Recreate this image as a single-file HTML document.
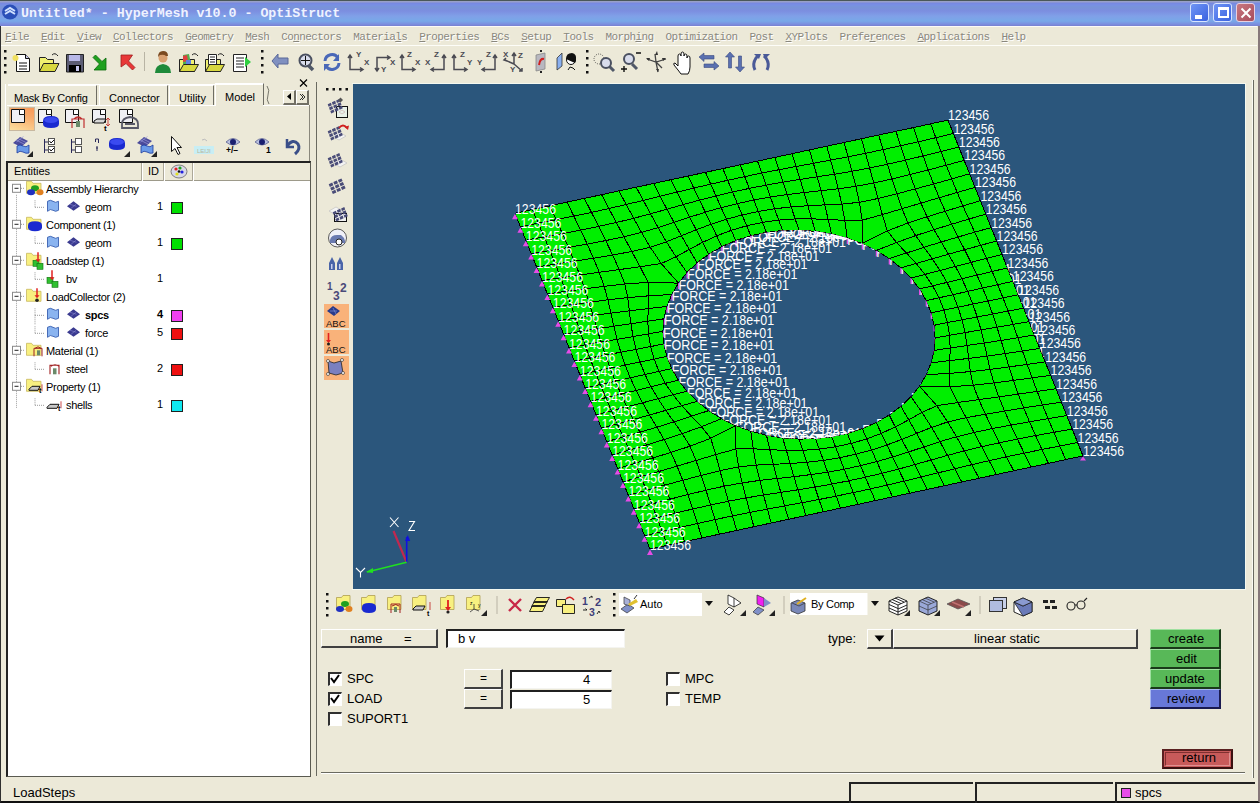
<!DOCTYPE html>
<html><head><meta charset="utf-8">
<style>
*{margin:0;padding:0;box-sizing:border-box}
html,body{width:1260px;height:803px;overflow:hidden;background:#ECE9D8}
body{font-family:"Liberation Sans",sans-serif;font-size:11px;color:#000;position:relative}
.a{position:absolute}
.t{position:absolute;white-space:pre;line-height:1}
#title{left:0;top:0;width:1260px;height:26px;background:linear-gradient(#4a5858 0px,#4a5858 1px,#98a0c8 1px,#98a0c8 2px,#7888e0 3px,#7890e4 5px,#7894d8 7px,#7c8ee0 11px,#80a0e8 16px,#78a8e8 21px,#7c90e0 24px,#7880d0 26px)}
#menu{left:0;top:26px;width:1260px;height:20px;background:#ECE9D8}
.mono{font-family:"Liberation Mono",monospace}
u{text-decoration:underline;text-underline-offset:1px;text-decoration-thickness:1px}
.btn{position:absolute;background:#ECE9D8;border-top:1px solid #fff;border-left:1px solid #fff;border-right:2px solid #404040;border-bottom:2px solid #404040;text-align:center}
.fld{position:absolute;background:#fff;border-top:2px solid #202020;border-left:2px solid #202020;border-right:1px solid #f4f4f0;border-bottom:1px solid #f4f4f0}
.cb{position:absolute;width:14px;height:14px;background:#fff;border-top:2px solid #303030;border-left:2px solid #303030;border-right:1px solid #fff;border-bottom:1px solid #fff}
.gb{position:absolute;background:#58b858;border-top:1px solid #9fe09f;border-left:1px solid #9fe09f;border-right:2px solid #1a3a1a;border-bottom:2px solid #1a3a1a;text-align:center;font-size:13px;line-height:17px}
</style></head><body>
<!-- window border -->
<div class="a" style="left:0;top:26px;width:1260px;height:777px;border-left:1px solid #303030;border-right:2px solid #86787a;border-bottom:2px solid #101010"></div>
<div id="title" class="a"></div>

<!-- app icon -->
<svg class="a" style="left:1px;top:3px" width="18" height="18" viewBox="0 0 18 18"><ellipse cx="9" cy="9" rx="8" ry="7.5" fill="#2a4fb8"/><path d="M4 8 L9 5 L14 8 M4 11 L9 8 L14 11" stroke="#cfe0ff" stroke-width="2" fill="none"/></svg>
<div class="t mono" style="left:21px;top:7px;font-size:13.3px;font-weight:bold;color:#eef2ff">Untitled* - HyperMesh v10.0 - OptiStruct</div>
<!-- title buttons -->
<div class="a" style="left:1190px;top:3px;width:19px;height:19px;border:1px solid #d8e4ff;border-radius:3px;background:linear-gradient(135deg,#6f95f5,#3a62e0)"><div class="a" style="left:4px;top:11px;width:7px;height:4px;background:#fff"></div></div>
<div class="a" style="left:1213px;top:3px;width:19px;height:19px;border:1px solid #d8e4ff;border-radius:3px;background:linear-gradient(135deg,#6f95f5,#3a62e0)"><div class="a" style="left:4px;top:3px;width:11px;height:11px;border:2px solid #fff;border-top-width:3px"></div></div>
<div class="a" style="left:1236px;top:3px;width:19px;height:19px;border:1px solid #e8d0e0;border-radius:3px;background:linear-gradient(135deg,#c87880,#a84c5c)"><svg class="a" style="left:3px;top:3px" width="12" height="12"><path d="M1.5 1.5L10.5 10.5M10.5 1.5L1.5 10.5" stroke="#fff" stroke-width="2"/></svg></div>

<!-- menu -->
<div class="a" style="left:1px;top:26px;width:1256px;height:1px;background:#fbfbf6"></div>
<div class="t mono" style="left:5px;top:31.5px;font-size:11px;letter-spacing:-0.6px;color:#8a887e;text-shadow:1px 1px 0 #fff"><u>F</u>ile  <u>E</u>dit  <u>V</u>iew  <u>C</u>ollectors  <u>G</u>eometry  <u>M</u>esh  Co<u>n</u>nectors  Materia<u>l</u>s  <u>P</u>roperties  <u>B</u>Cs  <u>S</u>etup  <u>T</u>ools  Morph<u>i</u>ng  Optimiza<u>t</u>ion  P<u>o</u>st  <u>X</u>YPlots  Prefe<u>r</u>ences  <u>A</u>pplications  <u>H</u>elp</div>
<div class="a" style="left:1px;top:45px;width:1256px;height:1px;background:#fdfdf8"></div>


<!-- main toolbar -->
<div id="tb1" class="a" style="left:0;top:46px;width:1260px;height:34px"></div>
<svg class="a" style="left:0;top:46px" width="800" height="34" viewBox="0 46 800 34">
<g fill="#111">
<rect x="4" y="50" width="2.5" height="2.5"/><rect x="4" y="57" width="2.5" height="2.5"/><rect x="4" y="64" width="2.5" height="2.5"/><rect x="4" y="71" width="2.5" height="2.5"/>
<rect x="261" y="50" width="2.5" height="2.5"/><rect x="261" y="57" width="2.5" height="2.5"/><rect x="261" y="64" width="2.5" height="2.5"/><rect x="261" y="71" width="2.5" height="2.5"/>
<rect x="586" y="50" width="2.5" height="2.5"/><rect x="586" y="57" width="2.5" height="2.5"/><rect x="586" y="64" width="2.5" height="2.5"/><rect x="586" y="71" width="2.5" height="2.5"/>
</g>
<!-- new doc -->
<path d="M16.5 54.5h9l4 4v13h-13z" fill="#fff" stroke="#111"/><path d="M25.5 54.5v4h4" fill="#c8c8e8" stroke="#111"/>
<path d="M19 63h8M19 66h8M19 69h8" stroke="#111"/>
<circle cx="15.5" cy="58" r="3" fill="#f0e060"/>
<!-- open folder -->
<path d="M39.5 57.5h6l2 2h6v12h-14z" fill="#f0f070" stroke="#222"/><path d="M39.5 71.5l4-8h15.5l-4 8z" fill="#d8d840" stroke="#222"/>
<path d="M52 55q3-3 6 1" stroke="#222" fill="none"/>
<!-- floppy -->
<path d="M66.5 54.5h17v17.5h-17z" fill="#5c5c74" stroke="#222"/><rect x="69" y="55" width="11" height="6" fill="#b8b8e8"/><rect x="69" y="65" width="12" height="7" fill="#000"/><rect x="76" y="66" width="3" height="5" fill="#c8c8f0"/>
<!-- green arrow -->
<path d="M93 57.5L95.5 55L102 61.5L106 58V70H94L99.5 64Z" fill="#1fa01f" stroke="#0a6a0a" stroke-width="0.8"/>
<!-- red arrow -->
<path d="M135 67.5L132.5 70L126 63.5L121 67V55H132.5L128.5 61Z" fill="#e83838" stroke="#a02020" stroke-width="0.8"/>
<rect x="144" y="52" width="1" height="19" fill="#b8b4a4"/>
<!-- person -->
<circle cx="163" cy="58" r="4.5" fill="#d8a070"/><path d="M158 57q0-6 5-6q5 0 5 5h-2q-2-2-6-1z" fill="#7a4a20"/><path d="M155 73q0-8 8-9q8 1 8 9z" fill="#1e8a3a"/>
<!-- folder color -->
<path d="M179.5 59.5h15v12h-15z" fill="#f0f070" stroke="#222"/><path d="M183 55l6-1 2 10h-8z" fill="#50b050"/><path d="M183 56l4-1 1 6-5 1z" fill="#e04040"/><path d="M186 60l5 0 0 5-5 0z" fill="#6080e0"/><path d="M179.5 71.5l4-7h15l-4 7z" fill="#d8d840" stroke="#222"/><path d="M192 55q3-3 6 1" stroke="#222" fill="none"/>
<!-- folder doc -->
<path d="M205.5 59.5h15v12h-15z" fill="#f0f070" stroke="#222"/><path d="M208.5 54.5h8v10h-8z" fill="#fff" stroke="#222"/><path d="M210 57h5M210 59.5h5M210 62h5" stroke="#222"/><path d="M205.5 71.5l4-7h15l-4 7z" fill="#d8d840" stroke="#222"/><path d="M218 55q3-3 6 1" stroke="#222" fill="none"/>
<!-- doc arrow -->
<path d="M233.5 54.5h13v17h-13z" fill="#fff" stroke="#222"/><path d="M236 58h8M236 61h8M236 64h8M236 67h8" stroke="#222"/><path d="M245 57l6 5-6 5z" fill="#30d040"/>
<!-- left arrow -->
<path d="M272 61l6-7v4h10v6h-10v4z" fill="#8090c0" stroke="#5a6898" stroke-width="1"/>
<!-- magnifier -->
<path d="M308 65l5 5" stroke="#505868" stroke-width="3.5"/><circle cx="305.5" cy="60.5" r="6" fill="#d8dcec" stroke="#4a5060" stroke-width="2"/><path d="M305.5 56v9M301 60.5h9" stroke="#111" stroke-width="1"/>
<!-- rotate -->
<path d="M325 61a7 7 0 0 1 13-3" stroke="#4a68b8" stroke-width="3" fill="none"/><path d="M339 54v7h-6z" fill="#4a68b8"/><path d="M339 63a7 7 0 0 1-13 3" stroke="#4a68b8" stroke-width="3" fill="none"/><path d="M324 71v-7h6z" fill="#4a68b8"/>
<g stroke="#4a4a52" stroke-width="1.5" fill="none">
<path d="M350 56v13.5h12M348 58l2-3 2 3M360 67.5l3 2-3 2"/>
<path d="M377 70v-12.5h12M375 68l2 3 2-3M387 55.5l3 2-3 2"/>
<path d="M402 56v13.5h12M400 58l2-3 2 3M412 67.5l3 2-3 2"/>
<path d="M444 56v13.5h-12M442 58l2-3 2 3M434 67.5l-3 2 3 2"/>
<path d="M454 56v13.5h12M452 58l2-3 2 3M464 67.5l3 2-3 2"/>
<path d="M495 56v13.5h-12M493 58l2-3 2 3M485 67.5l-3 2 3 2"/>
<path d="M514 64v-10M514 64l-9-4M514 64l8 7M512 56l2-3 2 3M506 58l-2 2 3 1M519 71l3 0 0-3"/>
</g>
<g font-family="Liberation Sans" font-weight="bold" font-size="8px" fill="#4a4a52">
<text x="356" y="57">Y</text><text x="364" y="65">X</text>
<text x="390" y="65">X</text><text x="381" y="72">Y</text>
<text x="407" y="57">Z</text><text x="415" y="65">X</text>
<text x="434" y="57">Z</text><text x="425" y="65">X</text>
<text x="460" y="57">Z</text><text x="467" y="65">Y</text>
<text x="486" y="57">Z</text><text x="477" y="65">Y</text>
<text x="503" y="57">X</text><text x="518" y="58">Z</text><text x="510" y="72">Y</text>
</g>
<!-- view icon -->
<path d="M536 55l9-2v16l-9 2z" fill="#b8b8c0" stroke="#888" stroke-width="0.8"/><path d="M539 65q1-7 5-6" stroke="#d02020" stroke-width="2" fill="none"/><rect x="540" y="50" width="2" height="2" fill="#222"/><rect x="540" y="71" width="2" height="2" fill="#222"/>
<!-- plane + face -->
<path d="M557 58l5-5v13l-5 4z" fill="#8ab0f0" stroke="#333" stroke-width="0.8"/><circle cx="571" cy="60" r="4.5" fill="#fff" stroke="#111"/><path d="M566 59q0-6 6-6q5 1 4 7l-1 3" fill="#111"/><path d="M568 70l2-3 3 1 2 2" stroke="#111" fill="none"/>
<!-- dotted zoom -->
<circle cx="599" cy="59" r="5" fill="none" stroke="#333" stroke-width="0.8" stroke-dasharray="1 1.2"/><path d="M609 66l5 5" stroke="#505868" stroke-width="3"/><circle cx="606" cy="63" r="5" fill="#d8dcec" stroke="#4a5060" stroke-width="2"/>
<!-- zoom +- -->
<path d="M632 64l5 5" stroke="#505868" stroke-width="3"/><circle cx="629" cy="59" r="5" fill="#d8dcec" stroke="#4a5060" stroke-width="2"/><path d="M636 53h5M621 69h6M624 66v6" stroke="#111" stroke-width="1.4"/>
<!-- compass -->
<path d="M647 59l9 3 10-3M656 62l2 10M656 62l-1-8M656 62l6 6" stroke="#444" stroke-width="1.3" fill="none"/><path d="M646 58l4 0-1 3zM666 58l-4 0 1 3zM657 51l-2 4 3 0zM658 72l-2-3 3 0z" fill="#333"/>
<!-- hand -->
<path d="M678 70l-4-5q-1-2 1-2l3 3v-10q0-2 1.5-2t1.5 2v-2q0-2 1.5-2t1.5 2v2q0-2 1.5-2t1.5 2v2q0-2 1.5-2t1.5 2v9q0 4-2 7h-7z" fill="#fff" stroke="#111" stroke-width="1"/>
<!-- horiz arrows -->
<path d="M699 57l5-4v2.5h10v3.5h-10v2.5z" fill="#5a70b0" stroke="#3a4a80" stroke-width="0.6"/><path d="M719 66l-5 4v-2.5h-10v-3.5h10v-2.5z" fill="#5a70b0" stroke="#3a4a80" stroke-width="0.6"/>
<!-- vert arrows -->
<path d="M730 52l4.5 5h-3v11h-3v-11h-3z" fill="#5a70b0" stroke="#3a4a80" stroke-width="0.6"/><path d="M740 72l-4.5-5h3v-11h3v11h3z" fill="#5a70b0" stroke="#3a4a80" stroke-width="0.6"/>
<!-- rotate 2 -->
<path d="M755 70q-3-6 1-12l2-2" stroke="#4a5a98" stroke-width="3" fill="none"/><path d="M754 54h7l-2 5z" fill="#4a5a98"/><path d="M767 70q3-6-1-12l-2-2" stroke="#4a5a98" stroke-width="3" fill="none"/><path d="M770 54h-7l2 5z" fill="#4a5a98"/>
</svg>


<!-- left panel -->
<div class="a" style="left:8px;top:84px;width:256px;height:1px;background:#fff"></div><div class="a" style="left:309px;top:105px;width:1px;height:56px;background:#8a887c"></div><div class="a" style="left:5px;top:84px;width:1px;height:77px;background:#fff"></div>

<div class="a" style="left:8px;top:85px;width:89px;height:21px;border-top:1px solid #fff;border-right:1px solid #6e6d64"></div>
<div class="a" style="left:99px;top:85px;width:69px;height:21px;border-top:1px solid #fff;border-left:1px solid #fff;border-right:1px solid #6e6d64"></div>
<div class="a" style="left:169px;top:85px;width:45px;height:21px;border-top:1px solid #fff;border-left:1px solid #fff;border-right:1px solid #6e6d64"></div>
<div class="a" style="left:215px;top:83px;width:49px;height:23px;border-top:1px solid #fff;border-left:1px solid #fff;border-right:1px solid #6e6d64"></div>
<div class="a" style="left:7px;top:105px;width:302px;height:1px;background:#fff"></div>
<div class="a" style="left:216px;top:105px;width:47px;height:1px;background:#ECE9D8"></div>
<div class="t" style="left:14px;top:93px;letter-spacing:-0.25px">Mask By Config</div>
<div class="t" style="left:109px;top:93px">Connector</div>
<div class="t" style="left:179px;top:93px">Utility</div>
<div class="t" style="left:225px;top:92px">Model</div>
<svg class="a" style="left:264px;top:84px" width="12" height="22"><path d="M3 2q3 4 1 9t1 9" stroke="#6a6a60" fill="none" stroke-width="0.9"/></svg>
<div class="a" style="left:283px;top:90px;width:13px;height:15px;border-top:1px solid #fff;border-left:1px solid #fff;border-right:2px solid #716f64;border-bottom:2px solid #716f64"></div>
<div class="a" style="left:296px;top:90px;width:13px;height:15px;border-top:1px solid #fff;border-left:1px solid #fff;border-right:2px solid #716f64;border-bottom:2px solid #716f64"></div>
<svg class="a" style="left:280px;top:78px" width="32" height="30" viewBox="280 78 32 30">
<path d="M291 93v7l-4-3.5z" fill="#000"/><path d="M300 94l3 3-3 3M302 94l3 3-3 3" stroke="#000" stroke-width="0.8" fill="none"/>
<path d="M300 79.5l7 7M307 79.5l-7 7" stroke="#000" stroke-width="1.15"/>
</svg>
<div class="a" style="left:9px;top:107px;width:26px;height:24px;border:1px solid #c8b8a0;background:linear-gradient(20deg,#fce0a0,#f8a868 70%,#f89858)"></div>
<svg class="a" style="left:0;top:104px" width="312" height="57" viewBox="0 104 312 57">
<defs>
<g id="pg"><path d="M0.5 0.5h8v5h5v8h-13z" fill="#f0f0f4" stroke="#111"/><path d="M8.5 0.5h5v5h-5z" fill="#fff" stroke="#111"/></g>
<g id="cush"><path d="M0 5q0-5 8-5t8 5v3q0 4-8 4t-8-4z" fill="#1a2ad0"/><path d="M1 4q1-3 7-3t7 3q-1 3-7 3t-7-3z" fill="#3a4af0"/></g>
<g id="mesh"><path d="M0 6l7-6 8 4-7 6z" fill="#4a4a9a"/><path d="M3 3l8 4M5 1.5l8 4M3.5 5l7-5.5" stroke="#9a9ad8" stroke-width="0.7"/><path d="M4 9q3-2 6 0t6-1v8q-3 1-6-1t-6 1z" fill="#6a9ae8" stroke="#1a3aa0" stroke-width="0.8"/></g>
<path id="tri" d="M6 0v6h-6z" fill="#222"/>
</defs>
<use href="#pg" x="11" y="109"/>
<use href="#pg" x="38" y="109"/><use href="#cush" x="43" y="116"/>
<use href="#pg" x="65" y="109"/><path d="M72 128v-9h12v9M74 119q4-4 8 0" stroke="#c03030" fill="none" stroke-width="1.2"/><rect x="76" y="121" width="4" height="6" fill="#6a8a6a"/>
<use href="#pg" x="92" y="109"/><path d="M94 121l3-2h9l-2 4h-10z" fill="#d8d8d8" stroke="#111"/><path d="M108 118l0 8M106 120l2-2 2 2M106 124l2 2 2-2" stroke="#c02020" stroke-width="0.8" fill="none"/><text x="104" y="131" font-size="8" font-family="Liberation Sans" font-weight="bold">t</text>
<use href="#pg" x="119" y="109"/><path d="M122 128v-4q0-6 8-7q8 1 8 7v4zM125 124h10" stroke="#5a5a68" stroke-width="1.8" fill="none"/>
<use href="#mesh" x="13" y="137"/><use href="#tri" x="27" y="151"/>
<path d="M44.5 139v14M44.5 142h4M44.5 150h4" stroke="#2a2a5a"/><rect x="48.5" y="138.5" width="6" height="6" fill="#fff" stroke="#555"/><rect x="48.5" y="146.5" width="6" height="6" fill="#fff" stroke="#555"/><path d="M49.5 141l1.5 2 3-3M49.5 149l1.5 2 3-3" stroke="#111" fill="none"/>
<path d="M71.5 139v14M71.5 142h4M71.5 150h4" stroke="#2a2a5a"/><rect x="75.5" y="138.5" width="6" height="6" fill="#fff" stroke="#555"/><rect x="75.5" y="146.5" width="6" height="6" fill="#fff" stroke="#555"/>
<path d="M95.5 142v-3h3v4M96 148h2M97 146v5" stroke="#2a2a5a" fill="none"/>
<use href="#cush" x="109" y="138"/><use href="#tri" x="124" y="151"/>
<use href="#mesh" x="137" y="137"/><use href="#tri" x="151" y="151"/>
<path d="M171.5 136.5v15l3.5-3 3 6 2-1-3-6h4.5z" fill="#fff" stroke="#111"/>
<rect x="194" y="146" width="20" height="8" fill="#c8eef4"/><text x="197" y="152.5" font-size="6" fill="#b8b8a0" font-family="Liberation Sans">LEIJI</text><path d="M202 140q3-2 5 1" stroke="#bbb" fill="none"/>
<path d="M226 142q7-7 14 0q-7 6-14 0z" fill="#b8c0e0" stroke="#5a6090" stroke-width="0.8"/><circle cx="233" cy="142" r="3" fill="#1a2070"/>
<text x="226" y="153" font-size="8.5" font-family="Liberation Sans" font-weight="bold">+/&#8211;</text>
<path d="M255 142q7-7 14 0q-7 6-14 0z" fill="#b8c0e0" stroke="#5a6090" stroke-width="0.8"/><circle cx="262" cy="142" r="3" fill="#1a2070"/>
<text x="266" y="153" font-size="8.5" font-family="Liberation Sans" font-weight="bold">1</text>
<path d="M287 139v8h7" stroke="#3a4e88" stroke-width="2.5" fill="none"/><path d="M287 146q6-8 11-2q3 5-3 10" stroke="#3a4e88" stroke-width="3" fill="none"/>
</svg>

<div class="a" style="left:6px;top:161px;width:305px;height:616px;background:#fff;border-top:2px solid #222;border-left:2px solid #222;border-right:1px solid #5a5a50;border-bottom:1px solid #5a5a50"></div>
<div class="a" style="left:8px;top:163px;width:302px;height:18px;background:#ECE9D8;border-bottom:1px solid #9d9a8a"></div>
<div class="a" style="left:141px;top:163px;width:2px;height:18px;background:#aca899;border-right:1px solid #fff"></div>
<div class="a" style="left:163px;top:163px;width:2px;height:18px;background:#aca899;border-right:1px solid #fff"></div>
<div class="a" style="left:192px;top:163px;width:2px;height:18px;background:#aca899;border-right:1px solid #fff"></div>
<div class="t" style="left:14px;top:166px">Entities</div>
<div class="t" style="left:148px;top:166px">ID</div>
<svg class="a" style="left:0;top:0" width="312" height="420"><path d="M16.5 194.8V408" stroke="#a0a0a0" stroke-dasharray="1 1"/><rect x="12.5" y="184.3" width="8" height="8" fill="#fff" stroke="#8a8a8a"/><path d="M14.5 188.3h4" stroke="#222"/><path d="M21 188.3h4" stroke="#999" stroke-dasharray="1 1"/><path d="M26.5 181.3h5l1.5 2h8v10h-14.5z" fill="#f8f080" stroke="#c8b860" stroke-width="0.8"/><ellipse cx="35" cy="188.3" rx="4" ry="3" fill="#20a020"/><ellipse cx="31" cy="192.3" rx="4" ry="3" fill="#2030c0"/><ellipse cx="40" cy="192.3" rx="3.5" ry="3" fill="#e08020"/><path d="M35 207.3v-8M35 207.3h9" stroke="#999" stroke-dasharray="1 1"/><path d="M47.5 201.3q3-2 5.5 0t5.5 0v9q-3 2-5.5 0t-5.5 1z" fill="#8ab4f0" stroke="#3a60b0" stroke-width="0.9"/><path d="M67 206.3l6.5-5 6.5 5-6.5 4.5z" fill="#3a3a90"/><path d="M70 204.3l6.5 2M71 208.3l5-4" stroke="#8888d0" stroke-width="0.6"/><rect x="12.5" y="220.3" width="8" height="8" fill="#fff" stroke="#8a8a8a"/><path d="M14.5 224.3h4" stroke="#222"/><path d="M21 224.3h4" stroke="#999" stroke-dasharray="1 1"/><path d="M26.5 217.3h5l1.5 2h8v10h-14.5z" fill="#f8f080" stroke="#c8b860" stroke-width="0.8"/><path d="M28 225.3q0-4 7-4t7 4v2q0 4-7 4t-7-4z" fill="#1a2ad0"/><path d="M35 243.3v-8M35 243.3h9" stroke="#999" stroke-dasharray="1 1"/><path d="M47.5 237.3q3-2 5.5 0t5.5 0v9q-3 2-5.5 0t-5.5 1z" fill="#8ab4f0" stroke="#3a60b0" stroke-width="0.9"/><path d="M67 242.3l6.5-5 6.5 5-6.5 4.5z" fill="#3a3a90"/><path d="M70 240.3l6.5 2M71 244.3l5-4" stroke="#8888d0" stroke-width="0.6"/><rect x="12.5" y="256.3" width="8" height="8" fill="#fff" stroke="#8a8a8a"/><path d="M14.5 260.3h4" stroke="#222"/><path d="M21 260.3h4" stroke="#999" stroke-dasharray="1 1"/><path d="M26.5 253.3h5l1.5 2h8v10h-14.5z" fill="#f8f080" stroke="#c8b860" stroke-width="0.8"/><rect x="33" y="260.3" width="6" height="6" fill="#30c030" stroke="#107010" stroke-width="0.6"/><rect x="37" y="263.3" width="6" height="6" fill="#30c030" stroke="#107010" stroke-width="0.6"/><path d="M38 252.3v8" stroke="#e02020" stroke-width="1.5"/><path d="M35.5 259.3l2.5 3 2.5-3z" fill="#e02020"/><path d="M35 279.3v-8M35 279.3h9" stroke="#999" stroke-dasharray="1 1"/><rect x="47" y="277.3" width="6" height="6" fill="#30c030" stroke="#107010" stroke-width="0.6"/><rect x="52" y="281.3" width="6" height="6" fill="#30c030" stroke="#107010" stroke-width="0.6"/><path d="M52 270.3v8" stroke="#e02020" stroke-width="1.5"/><path d="M49.5 277.3l2.5 3 2.5-3z" fill="#e02020"/><rect x="12.5" y="292.3" width="8" height="8" fill="#fff" stroke="#8a8a8a"/><path d="M14.5 296.3h4" stroke="#222"/><path d="M21 296.3h4" stroke="#999" stroke-dasharray="1 1"/><path d="M26.5 289.3h5l1.5 2h8v10h-14.5z" fill="#f8f080" stroke="#c8b860" stroke-width="0.8"/><path d="M37 288.3v8" stroke="#e02020" stroke-width="1.5"/><path d="M34.5 295.3l2.5 3 2.5-3z" fill="#e02020"/><circle cx="37" cy="300.3" r="1.8" fill="#222"/><path d="M35 315.3v-8M35 315.3h9" stroke="#999" stroke-dasharray="1 1"/><path d="M47.5 309.3q3-2 5.5 0t5.5 0v9q-3 2-5.5 0t-5.5 1z" fill="#8ab4f0" stroke="#3a60b0" stroke-width="0.9"/><path d="M67 314.3l6.5-5 6.5 5-6.5 4.5z" fill="#3a3a90"/><path d="M70 312.3l6.5 2M71 316.3l5-4" stroke="#8888d0" stroke-width="0.6"/><path d="M35 333.3v-8M35 333.3h9" stroke="#999" stroke-dasharray="1 1"/><path d="M35 324.3v-10" stroke="#999" stroke-dasharray="1 1"/><path d="M47.5 327.3q3-2 5.5 0t5.5 0v9q-3 2-5.5 0t-5.5 1z" fill="#8ab4f0" stroke="#3a60b0" stroke-width="0.9"/><path d="M67 332.3l6.5-5 6.5 5-6.5 4.5z" fill="#3a3a90"/><path d="M70 330.3l6.5 2M71 334.3l5-4" stroke="#8888d0" stroke-width="0.6"/><rect x="12.5" y="346.3" width="8" height="8" fill="#fff" stroke="#8a8a8a"/><path d="M14.5 350.3h4" stroke="#222"/><path d="M21 350.3h4" stroke="#999" stroke-dasharray="1 1"/><path d="M26.5 343.3h5l1.5 2h8v10h-14.5z" fill="#f8f080" stroke="#c8b860" stroke-width="0.8"/><path d="M34 356.3v-8h8v8M35 348.3q3-3 6 0" stroke="#a02020" fill="none"/><rect x="37" y="350.3" width="3" height="5" fill="#6a8a6a"/><path d="M35 369.3v-8M35 369.3h9" stroke="#999" stroke-dasharray="1 1"/><path d="M50 374.3v-9h9v9M51 366.3q4-3 8 0" stroke="#a02020" fill="none" stroke-width="1.1"/><rect x="53" y="368.3" width="3.5" height="6" fill="#6a8a6a"/><rect x="12.5" y="382.3" width="8" height="8" fill="#fff" stroke="#8a8a8a"/><path d="M14.5 386.3h4" stroke="#222"/><path d="M21 386.3h4" stroke="#999" stroke-dasharray="1 1"/><path d="M26.5 379.3h5l1.5 2h8v10h-14.5z" fill="#f8f080" stroke="#c8b860" stroke-width="0.8"/><path d="M29 389.3l3-3h8l-2 4h-9z" fill="#c8c8c8" stroke="#111"/><path d="M42 384.3v7" stroke="#c02020" stroke-width="0.8"/><text x="39" y="393.3" font-size="7" font-weight="bold" font-family="Liberation Sans">t</text><path d="M35 405.3v-8M35 405.3h9" stroke="#999" stroke-dasharray="1 1"/><path d="M47 407.3l3-3h9l-2 4h-10z" fill="#c8c8c8" stroke="#111"/><path d="M61 401.3v7" stroke="#c02020" stroke-width="0.8"/><text x="58" y="411.3" font-size="7" font-weight="bold" font-family="Liberation Sans">t</text></svg><div class="t" style="left:46px;top:183.5px;letter-spacing:-0.3px;">Assembly Hierarchy</div><div class="t" style="left:85px;top:201.5px;letter-spacing:-0.3px;">geom</div><div class="t" style="left:157px;top:200.5px;">1</div><div class="a" style="left:171px;top:201.8px;width:12px;height:12px;background:#00e000;border:1px solid #202020"></div><div class="t" style="left:46px;top:219.5px;letter-spacing:-0.3px;">Component (1)</div><div class="t" style="left:85px;top:237.5px;letter-spacing:-0.3px;">geom</div><div class="t" style="left:157px;top:236.5px;">1</div><div class="a" style="left:171px;top:237.8px;width:12px;height:12px;background:#00e000;border:1px solid #202020"></div><div class="t" style="left:46px;top:255.5px;letter-spacing:-0.3px;">Loadstep (1)</div><div class="t" style="left:66px;top:273.5px;letter-spacing:-0.3px;">bv</div><div class="t" style="left:157px;top:272.5px;">1</div><div class="t" style="left:46px;top:291.5px;letter-spacing:-0.3px;">LoadCollector (2)</div><div class="t" style="left:85px;top:309.5px;letter-spacing:-0.3px; font-weight:bold;">spcs</div><div class="t" style="left:157px;top:308.5px; font-weight:bold;">4</div><div class="a" style="left:171px;top:309.8px;width:12px;height:12px;background:#f040f0;border:1px solid #202020"></div><div class="t" style="left:85px;top:327.5px;letter-spacing:-0.3px;">force</div><div class="t" style="left:157px;top:326.5px;">5</div><div class="a" style="left:171px;top:327.8px;width:12px;height:12px;background:#ee1010;border:1px solid #202020"></div><div class="t" style="left:46px;top:345.5px;letter-spacing:-0.3px;">Material (1)</div><div class="t" style="left:66px;top:363.5px;letter-spacing:-0.3px;">steel</div><div class="t" style="left:157px;top:362.5px;">2</div><div class="a" style="left:171px;top:363.8px;width:12px;height:12px;background:#ee1010;border:1px solid #202020"></div><div class="t" style="left:46px;top:381.5px;letter-spacing:-0.3px;">Property (1)</div><div class="t" style="left:66px;top:399.5px;letter-spacing:-0.3px;">shells</div><div class="t" style="left:157px;top:398.5px;">1</div><div class="a" style="left:171px;top:399.8px;width:12px;height:12px;background:#10e8f0;border:1px solid #202020"></div><svg class="a" style="left:168px;top:163px" width="22" height="17"><ellipse cx="11" cy="8.5" rx="8" ry="6.5" fill="#d8d8e8" stroke="#666" stroke-width="0.8"/><circle cx="8" cy="6" r="1.6" fill="#e02020"/><circle cx="12" cy="5" r="1.6" fill="#20a020"/><circle cx="14" cy="9" r="1.6" fill="#2020e0"/><circle cx="9" cy="11" r="1.6" fill="#e0e020"/><circle cx="11" cy="8.5" r="1.3" fill="#111"/></svg>
<!-- splitter -->
<div class="a" style="left:316px;top:82px;width:1px;height:694px;background:#6a6a60"></div>

<!-- vertical toolbar -->
<svg class="a" style="left:318px;top:82px" width="36" height="302" viewBox="318 82 36 302">
<g fill="#111"><rect x="326" y="88" width="2.5" height="2.5"/><rect x="332.5" y="88" width="2.5" height="2.5"/><rect x="339" y="88" width="2.5" height="2.5"/><rect x="345.5" y="88" width="2.5" height="2.5"/></g>
<rect x="336.5" y="106.5" width="11" height="11" fill="#e8f0e8" stroke="#111"/><path d="M339 112l3-2 3 2-3 2z" fill="none" stroke="#c8a8a8" stroke-width="0.6"/>
<path d="M327.7 104.2L330.9 102.7L331.8 105.3L328.6 106.8Z M329.0 107.6L332.2 106.1L333.1 108.7L329.9 110.2Z M330.3 111.0L333.5 109.5L334.4 112.1L331.2 113.6Z M331.9 102.3L335.1 100.8L336.0 103.4L332.8 104.9Z M333.2 105.7L336.4 104.2L337.3 106.8L334.1 108.3Z M334.5 109.1L337.7 107.6L338.6 110.2L335.4 111.7Z M336.1 100.4L339.3 98.9L340.2 101.5L337.0 103.0Z M337.4 103.8L340.6 102.3L341.5 104.9L338.3 106.4Z M338.7 107.2L341.9 105.7L342.8 108.3L339.6 109.8Z" fill="#4a4c78"/>
<path d="M338 100l2.5-2.5 2.5 2.5-2.5 2.5z" fill="#555"/>
<path d="M332 136l7-4 7 4-7 4z" fill="#f4f4f4" stroke="#bbb" stroke-width="0.6"/>
<path d="M327.7 131.2L330.9 129.7L331.8 132.3L328.6 133.8Z M329.0 134.6L332.2 133.1L333.1 135.7L329.9 137.2Z M330.3 138.0L333.5 136.5L334.4 139.1L331.2 140.6Z M331.9 129.3L335.1 127.8L336.0 130.4L332.8 131.9Z M333.2 132.7L336.4 131.2L337.3 133.8L334.1 135.3Z M334.5 136.1L337.7 134.6L338.6 137.2L335.4 138.7Z M336.1 127.4L339.3 125.9L340.2 128.5L337.0 130.0Z M337.4 130.8L340.6 129.3L341.5 131.9L338.3 133.4Z M338.7 134.2L341.9 132.7L342.8 135.3L339.6 136.8Z" fill="#4a4c78"/>
<path d="M339 128q4-5 8 0" stroke="#d02020" stroke-width="1.8" fill="none"/><path d="M344.5 127l3.5 3 1-4.5z" fill="#d02020"/>
<path d="M333 163l7-4 7 4-7 4z" fill="#f4f4f4" stroke="#bbb" stroke-width="0.6"/>
<path d="M327.7 158.2L330.9 156.7L331.8 159.3L328.6 160.8Z M329.0 161.6L332.2 160.1L333.1 162.7L329.9 164.2Z M330.3 165.0L333.5 163.5L334.4 166.1L331.2 167.6Z M331.9 156.3L335.1 154.8L336.0 157.4L332.8 158.9Z M333.2 159.7L336.4 158.2L337.3 160.8L334.1 162.3Z M334.5 163.1L337.7 161.6L338.6 164.2L335.4 165.7Z M336.1 154.4L339.3 152.9L340.2 155.5L337.0 157.0Z M337.4 157.8L340.6 156.3L341.5 158.9L338.3 160.4Z M338.7 161.2L341.9 159.7L342.8 162.3L339.6 163.8Z" fill="#4a4c78"/>
<path d="M328.7 184.2L332.2 182.6L333.4 185.3L329.9 186.9Z M330.2 187.8L333.7 186.2L334.9 188.9L331.4 190.5Z M331.7 191.4L335.2 189.8L336.4 192.5L332.9 194.1Z M333.3 182.1L336.8 180.5L338.0 183.2L334.5 184.8Z M334.8 185.7L338.3 184.1L339.5 186.8L336.0 188.4Z M336.3 189.3L339.8 187.7L341.0 190.4L337.5 192.0Z M337.9 180.0L341.4 178.4L342.6 181.1L339.1 182.7Z M339.4 183.6L342.9 182.0L344.1 184.7L340.6 186.3Z M340.9 187.2L344.4 185.6L345.6 188.3L342.1 189.9Z" fill="#4a4c78"/>
<path d="M329 211l7-4 7 4-7 4z" fill="#f4f4f4" stroke="#bbb" stroke-width="0.6"/><rect x="334.5" y="213.5" width="12" height="8" fill="#f0f0f0" stroke="#111"/>
<path d="M332.7 212.2L335.9 210.7L336.8 213.3L333.6 214.8Z M334.0 215.6L337.2 214.1L338.1 216.7L334.9 218.2Z M335.3 219.0L338.5 217.5L339.4 220.1L336.2 221.6Z M336.9 210.3L340.1 208.8L341.0 211.4L337.8 212.9Z M338.2 213.7L341.4 212.2L342.3 214.8L339.1 216.3Z M339.5 217.1L342.7 215.6L343.6 218.2L340.4 219.7Z M341.1 208.4L344.3 206.9L345.2 209.5L342.0 211.0Z M342.4 211.8L345.6 210.3L346.5 212.9L343.3 214.4Z M343.7 215.2L346.9 213.7L347.8 216.3L344.6 217.8Z" fill="#4a4c78"/>
<circle cx="337.5" cy="238" r="9" fill="#f0f0f8" stroke="#333" stroke-width="0.8"/><path d="M330 240q1-5 7-5h4q3 2 4 6v2h-15z" fill="#6a7ab0"/><circle cx="339" cy="242" r="3" fill="#fff" stroke="#222"/>
<path d="M329 270v-7l3-6 3 6v7zM337 270v-7l3-6 3 6v7z" fill="#4a64a8"/><rect x="331" y="264" width="1.5" height="5" fill="#c8d0f0"/><rect x="339" y="264" width="1.5" height="5" fill="#c8d0f0"/>
<g font-family="Liberation Sans" font-weight="bold" fill="#4a4a78"><text x="327" y="290" font-size="10">1</text><text x="333" y="300" font-size="12">3</text><text x="340" y="292" font-size="12">2</text></g>
<rect x="324" y="304" width="25" height="24" fill="#f9b27a"/><rect x="324" y="330" width="25" height="24" fill="#f9b27a"/><rect x="324" y="356" width="25" height="24" fill="#f9b27a"/>
<path d="M327 311l6-5 7 5-6 5z" fill="#2a3a8a"/><path d="M330 311l7 0M333 308l3 6" stroke="#8a9ae0" stroke-width="0.6"/>
<text x="326" y="327" font-family="Liberation Sans" font-size="9.5" fill="#111">ABC</text>
<path d="M328.5 333v9" stroke="#e02020" stroke-width="1.6"/><path d="M326 340l2.5 3 2.5-3z" fill="#e02020"/><circle cx="328.5" cy="344" r="1.5" fill="#222"/>
<text x="326" y="353" font-family="Liberation Sans" font-size="9.5" fill="#111">ABC</text>
<path d="M328 361l6 2 7-2 2 12-7 2-7-2z" fill="#7a80c0" stroke="#222" stroke-width="0.8"/><g fill="#fff" stroke="#222" stroke-width="0.6"><circle cx="328" cy="361" r="1.5"/><circle cx="342" cy="360" r="1.5"/><circle cx="343" cy="373" r="1.5"/><circle cx="328" cy="374" r="1.5"/></g>
</svg>

<!-- viewport -->
<div class="a" style="left:353px;top:84px;width:892px;height:505px;background:#2b567c;overflow:hidden"></div>
<div class="a" style="left:352px;top:83px;width:894px;height:1px;background:#f4f8f0"></div><div class="a" style="left:1245px;top:83px;width:1px;height:507px;background:#f4f8f0"></div><div class="a" style="left:352px;top:589px;width:894px;height:1px;background:#f4f8f0"></div><div class="a" style="left:1252px;top:80px;width:1px;height:698px;background:#fbfbf4"></div>
<svg class="a" style="left:0;top:0" width="1260" height="803"><defs><clipPath id="vp"><rect x="353" y="84" width="892" height="505"/></clipPath></defs><g clip-path="url(#vp)">
<path d="M515.0 213.3L948.0 120.1L1083.0 455.9L650.0 549.1Z M931.1 312.8L934.1 325.3L935.1 337.9L934.1 350.4L931.1 362.8L926.2 374.7L919.5 386.1L911.0 396.7L900.9 406.3L889.2 415.0L876.3 422.5L862.3 428.6L847.3 433.5L831.6 436.8L815.4 438.7L799.0 439.1L782.6 437.9L766.5 435.3L750.8 431.1L735.8 425.6L721.7 418.7L708.8 410.6L697.2 401.4L687.0 391.3L678.5 380.3L671.8 368.6L666.9 356.4L663.9 343.9L662.9 331.3L663.9 318.8L666.9 306.4L671.8 294.5L678.5 283.1L687.0 272.5L697.1 262.9L708.8 254.2L721.7 246.7L735.7 240.6L750.7 235.7L766.4 232.4L782.6 230.5L799.0 230.1L815.4 231.3L831.5 233.9L847.2 238.1L862.2 243.6L876.3 250.5L889.2 258.6L900.8 267.8L911.0 277.9L919.5 288.9L926.2 300.6Z" fill="#00ef00" fill-rule="evenodd"/>
<path d="M515.0 213.3L532.3 209.6 M515.0 213.3L520.4 226.7 M520.4 226.7L538.3 223.2 M520.4 226.7L525.8 240.2 M525.8 240.2L544.1 236.9 M525.8 240.2L531.2 253.6 M531.2 253.6L549.9 250.5 M531.2 253.6L536.6 267.0 M536.6 267.0L555.5 264.2 M536.6 267.0L542.0 280.5 M542.0 280.5L560.8 277.8 M542.0 280.5L547.4 293.9 M547.4 293.9L565.9 291.3 M547.4 293.9L552.8 307.3 M552.8 307.3L570.8 304.8 M552.8 307.3L558.2 320.8 M558.2 320.8L575.5 318.2 M558.2 320.8L563.6 334.2 M563.6 334.2L580.2 331.5 M563.6 334.2L569.0 347.6 M569.0 347.6L584.9 344.8 M569.0 347.6L574.4 361.1 M574.4 361.1L589.9 358.1 M574.4 361.1L579.8 374.5 M579.8 374.5L595.0 371.3 M579.8 374.5L585.2 387.9 M585.2 387.9L600.3 384.5 M585.2 387.9L590.6 401.3 M590.6 401.3L605.8 397.7 M590.6 401.3L596.0 414.8 M596.0 414.8L611.5 410.8 M596.0 414.8L601.4 428.2 M601.4 428.2L617.3 423.9 M601.4 428.2L606.8 441.6 M606.8 441.6L623.3 437.0 M606.8 441.6L612.2 455.1 M612.2 455.1L629.2 450.1 M612.2 455.1L617.6 468.5 M617.6 468.5L635.1 463.3 M617.6 468.5L623.0 481.9 M623.0 481.9L640.8 476.7 M623.0 481.9L628.4 495.4 M628.4 495.4L646.4 490.3 M628.4 495.4L633.8 508.8 M633.8 508.8L651.8 504.0 M633.8 508.8L639.2 522.2 M639.2 522.2L657.0 517.7 M639.2 522.2L644.6 535.7 M644.6 535.7L662.2 531.5 M644.6 535.7L650.0 549.1 M650.0 549.1L667.3 545.4 M532.3 209.6L549.6 205.8 M532.3 209.6L538.3 223.2 M538.3 223.2L556.1 219.7 M538.3 223.2L544.1 236.9 M544.1 236.9L562.4 233.6 M544.1 236.9L549.9 250.5 M549.9 250.5L568.5 247.4 M549.9 250.5L555.5 264.2 M555.5 264.2L574.4 261.3 M555.5 264.2L560.8 277.8 M560.8 277.8L579.8 275.1 M560.8 277.8L565.9 291.3 M565.9 291.3L584.7 288.8 M565.9 291.3L570.8 304.8 M570.8 304.8L589.0 302.3 M570.8 304.8L575.5 318.2 M575.5 318.2L593.0 315.6 M575.5 318.2L580.2 331.5 M580.2 331.5L596.9 328.8 M580.2 331.5L584.9 344.8 M584.9 344.8L601.0 342.0 M584.9 344.8L589.9 358.1 M589.9 358.1L605.4 355.1 M589.9 358.1L595.0 371.3 M595.0 371.3L610.1 368.2 M595.0 371.3L600.3 384.5 M600.3 384.5L615.4 381.2 M600.3 384.5L605.8 397.7 M605.8 397.7L621.0 394.1 M605.8 397.7L611.5 410.8 M611.5 410.8L627.0 406.8 M611.5 410.8L617.3 423.9 M617.3 423.9L633.4 419.5 M617.3 423.9L623.3 437.0 M623.3 437.0L639.9 432.2 M623.3 437.0L629.2 450.1 M629.2 450.1L646.4 445.0 M629.2 450.1L635.1 463.3 M635.1 463.3L652.8 458.0 M635.1 463.3L640.8 476.7 M640.8 476.7L658.8 471.5 M640.8 476.7L646.4 490.3 M646.4 490.3L664.4 485.2 M646.4 490.3L651.8 504.0 M651.8 504.0L669.8 499.2 M651.8 504.0L657.0 517.7 M657.0 517.7L674.9 513.3 M657.0 517.7L662.2 531.5 M662.2 531.5L679.8 527.4 M662.2 531.5L667.3 545.4 M667.3 545.4L684.6 541.6 M549.6 205.8L567.0 202.1 M549.6 205.8L556.1 219.7 M556.1 219.7L573.8 216.1 M556.1 219.7L562.4 233.6 M562.4 233.6L580.6 230.1 M562.4 233.6L568.5 247.4 M568.5 247.4L587.2 244.1 M568.5 247.4L574.4 261.3 M574.4 261.3L593.4 258.2 M574.4 261.3L579.8 275.1 M579.8 275.1L599.2 272.3 M579.8 275.1L584.7 288.8 M584.7 288.8L604.1 286.3 M584.7 288.8L589.0 302.3 M589.0 302.3L607.9 299.8 M589.0 302.3L593.0 315.6 M593.0 315.6L610.9 313.1 M593.0 315.6L596.9 328.8 M596.9 328.8L613.8 326.2 M596.9 328.8L601.0 342.0 M601.0 342.0L617.0 339.3 M601.0 342.0L605.4 355.1 M605.4 355.1L620.8 352.2 M605.4 355.1L610.1 368.2 M610.1 368.2L625.2 365.1 M610.1 368.2L615.4 381.2 M615.4 381.2L630.3 377.8 M615.4 381.2L621.0 394.1 M621.0 394.1L636.1 390.4 M621.0 394.1L627.0 406.8 M627.0 406.8L642.6 402.8 M627.0 406.8L633.4 419.5 M633.4 419.5L649.5 415.0 M633.4 419.5L639.9 432.2 M639.9 432.2L656.8 427.2 M639.9 432.2L646.4 445.0 M646.4 445.0L664.1 439.5 M646.4 445.0L652.8 458.0 M652.8 458.0L670.9 452.4 M652.8 458.0L658.8 471.5 M658.8 471.5L677.1 466.1 M658.8 471.5L664.4 485.2 M664.4 485.2L682.7 480.3 M664.4 485.2L669.8 499.2 M669.8 499.2L687.9 494.6 M669.8 499.2L674.9 513.3 M674.9 513.3L692.7 509.0 M674.9 513.3L679.8 527.4 M679.8 527.4L697.4 523.5 M679.8 527.4L684.6 541.6 M684.6 541.6L702.0 537.9 M567.0 202.1L584.3 198.4 M567.0 202.1L573.8 216.1 M573.8 216.1L591.5 212.4 M573.8 216.1L580.6 230.1 M580.6 230.1L598.6 226.4 M580.6 230.1L587.2 244.1 M587.2 244.1L605.7 240.6 M587.2 244.1L593.4 258.2 M593.4 258.2L612.6 255.0 M593.4 258.2L599.2 272.3 M599.2 272.3L619.2 269.6 M599.2 272.3L604.1 286.3 M604.1 286.3L624.8 284.0 M604.1 286.3L607.9 299.8 M607.9 299.8L627.7 297.6 M607.9 299.8L610.9 313.1 M610.9 313.1L629.3 310.8 M610.9 313.1L613.8 326.2 M613.8 326.2L630.9 323.7 M613.8 326.2L617.0 339.3 M617.0 339.3L633.0 336.6 M617.0 339.3L620.8 352.2 M620.8 352.2L636.0 349.4 M620.8 352.2L625.2 365.1 M625.2 365.1L640.0 362.0 M625.2 365.1L630.3 377.8 M630.3 377.8L645.0 374.5 M630.3 377.8L636.1 390.4 M636.1 390.4L651.0 386.8 M636.1 390.4L642.6 402.8 M642.6 402.8L658.0 398.7 M642.6 402.8L649.5 415.0 M649.5 415.0L665.7 410.4 M649.5 415.0L656.8 427.2 M656.8 427.2L674.0 421.9 M656.8 427.2L664.1 439.5 M664.1 439.5L682.3 433.6 M664.1 439.5L670.9 452.4 M670.9 452.4L690.0 446.2 M670.9 452.4L677.1 466.1 M677.1 466.1L696.0 460.5 M677.1 466.1L682.7 480.3 M682.7 480.3L701.2 475.4 M682.7 480.3L687.9 494.6 M687.9 494.6L706.0 490.2 M687.9 494.6L692.7 509.0 M692.7 509.0L710.6 505.0 M692.7 509.0L697.4 523.5 M697.4 523.5L715.0 519.6 M697.4 523.5L702.0 537.9 M702.0 537.9L719.3 534.2 M584.3 198.4L601.6 194.7 M584.3 198.4L591.5 212.4 M591.5 212.4L608.9 208.5 M591.5 212.4L598.6 226.4 M598.6 226.4L616.3 222.5 M598.6 226.4L605.7 240.6 M605.7 240.6L623.9 236.8 M605.7 240.6L612.6 255.0 M612.6 255.0L631.8 251.5 M612.6 255.0L619.2 269.6 M619.2 269.6L640.1 266.7 M619.2 269.6L624.8 284.0 M624.8 284.0L648.1 282.4 M624.8 284.0L627.7 297.6 M627.7 297.6L648.9 295.8 M627.7 297.6L629.3 310.8 M629.3 310.8L648.2 308.6 M629.3 310.8L630.9 323.7 M630.9 323.7L647.8 321.2 M630.9 323.7L633.0 336.6 M633.0 336.6L648.5 333.9 M633.0 336.6L636.0 349.4 M636.0 349.4L650.6 346.6 M636.0 349.4L640.0 362.0 M640.0 362.0L654.1 359.1 M640.0 362.0L645.0 374.5 M645.0 374.5L659.0 371.4 M645.0 374.5L651.0 386.8 M651.0 386.8L665.3 383.3 M651.0 386.8L658.0 398.7 M658.0 398.7L673.0 394.8 M658.0 398.7L665.7 410.4 M665.7 410.4L681.8 405.7 M665.7 410.4L674.0 421.9 M674.0 421.9L691.5 416.2 M674.0 421.9L682.3 433.6 M682.3 433.6L701.5 426.7 M682.3 433.6L690.0 446.2 M690.0 446.2L710.7 438.3 M690.0 446.2L696.0 460.5 M696.0 460.5L715.7 454.6 M696.0 460.5L701.2 475.4 M701.2 475.4L720.0 470.7 M701.2 475.4L706.0 490.2 M706.0 490.2L724.2 486.2 M706.0 490.2L710.6 505.0 M710.6 505.0L728.4 501.2 M710.6 505.0L715.0 519.6 M715.0 519.6L732.5 515.9 M715.0 519.6L719.3 534.2 M719.3 534.2L736.6 530.5 M601.6 194.7L618.9 190.9 M601.6 194.7L608.9 208.5 M608.9 208.5L626.2 204.5 M608.9 208.5L616.3 222.5 M616.3 222.5L633.7 218.3 M616.3 222.5L623.9 236.8 M623.9 236.8L641.5 232.4 M623.9 236.8L631.8 251.5 M631.8 251.5L650.3 247.3 M631.8 251.5L640.1 266.7 M640.1 266.7L661.2 263.5 M640.1 266.7L648.1 282.4 M648.1 282.4L678.5 283.1 M648.1 282.4L648.9 295.8 M648.9 295.8L671.8 294.5 M648.9 295.8L648.2 308.6 M648.2 308.6L666.9 306.4 M648.2 308.6L647.8 321.2 M647.8 321.2L663.9 318.8 M647.8 321.2L648.5 333.9 M648.5 333.9L662.9 331.3 M648.5 333.9L650.6 346.6 M650.6 346.6L663.9 343.9 M650.6 346.6L654.1 359.1 M654.1 359.1L666.9 356.4 M654.1 359.1L659.0 371.4 M659.0 371.4L671.8 368.6 M659.0 371.4L665.3 383.3 M665.3 383.3L678.5 380.3 M665.3 383.3L673.0 394.8 M673.0 394.8L687.0 391.3 M673.0 394.8L681.8 405.7 M681.8 405.7L697.2 401.4 M681.8 405.7L691.5 416.2 M691.5 416.2L708.8 410.6 M691.5 416.2L701.5 426.7 M701.5 426.7L721.7 418.7 M701.5 426.7L710.7 438.3 M710.7 438.3L735.8 425.6 M710.7 438.3L715.7 454.6 M715.7 454.6L735.8 449.0 M715.7 454.6L720.0 470.7 M720.0 470.7L738.6 466.9 M720.0 470.7L724.2 486.2 M724.2 486.2L742.2 482.9 M724.2 486.2L728.4 501.2 M728.4 501.2L746.1 497.9 M728.4 501.2L732.5 515.9 M732.5 515.9L750.0 512.4 M732.5 515.9L736.6 530.5 M736.6 530.5L753.9 526.7 M618.9 190.9L636.2 187.2 M618.9 190.9L626.2 204.5 M626.2 204.5L643.3 200.4 M626.2 204.5L633.7 218.3 M633.7 218.3L650.5 213.8 M633.7 218.3L641.5 232.4 M641.5 232.4L658.1 227.6 M641.5 232.4L650.3 247.3 M650.3 247.3L666.4 241.8 M650.3 247.3L661.2 263.5 M661.2 263.5L676.0 256.8 M661.2 263.5L678.5 283.1 M678.5 283.1L687.0 272.5 M678.5 283.1L671.8 294.5 M671.8 294.5L666.9 306.4 M666.9 306.4L663.9 318.8 M663.9 318.8L662.9 331.3 M662.9 331.3L663.9 343.9 M663.9 343.9L666.9 356.4 M666.9 356.4L671.8 368.6 M671.8 368.6L678.5 380.3 M678.5 380.3L687.0 391.3 M687.0 391.3L697.2 401.4 M697.2 401.4L708.8 410.6 M708.8 410.6L721.7 418.7 M721.7 418.7L735.8 425.6 M735.8 425.6L750.8 431.1 M735.8 425.6L735.8 449.0 M735.8 449.0L753.2 448.8 M735.8 449.0L738.6 466.9 M738.6 466.9L756.2 465.1 M738.6 466.9L742.2 482.9 M742.2 482.9L759.8 480.4 M742.2 482.9L746.1 497.9 M746.1 497.9L763.5 495.0 M746.1 497.9L750.0 512.4 M750.0 512.4L767.4 509.1 M750.0 512.4L753.9 526.7 M753.9 526.7L771.2 523.0 M636.2 187.2L653.6 183.5 M636.2 187.2L643.3 200.4 M643.3 200.4L660.2 196.3 M643.3 200.4L650.5 213.8 M650.5 213.8L666.9 209.2 M650.5 213.8L658.1 227.6 M658.1 227.6L674.0 222.3 M658.1 227.6L666.4 241.8 M666.4 241.8L681.4 235.8 M666.4 241.8L676.0 256.8 M676.0 256.8L689.3 249.4 M676.0 256.8L687.0 272.5 M687.0 272.5L697.1 262.9 M750.8 431.1L766.5 435.3 M750.8 431.1L753.2 448.8 M753.2 448.8L769.8 449.7 M753.2 448.8L756.2 465.1 M756.2 465.1L773.3 464.3 M756.2 465.1L759.8 480.4 M759.8 480.4L777.0 478.5 M759.8 480.4L763.5 495.0 M763.5 495.0L780.8 492.4 M763.5 495.0L767.4 509.1 M767.4 509.1L784.6 505.9 M767.4 509.1L771.2 523.0 M771.2 523.0L788.6 519.3 M653.6 183.5L670.9 179.7 M653.6 183.5L660.2 196.3 M660.2 196.3L677.0 192.1 M660.2 196.3L666.9 209.2 M666.9 209.2L683.2 204.6 M666.9 209.2L674.0 222.3 M674.0 222.3L689.6 217.2 M674.0 222.3L681.4 235.8 M681.4 235.8L696.2 229.8 M681.4 235.8L689.3 249.4 M689.3 249.4L702.7 242.3 M689.3 249.4L697.1 262.9 M697.1 262.9L708.8 254.2 M766.5 435.3L782.6 437.9 M766.5 435.3L769.8 449.7 M769.8 449.7L786.4 450.4 M769.8 449.7L773.3 464.3 M773.3 464.3L790.1 463.5 M773.3 464.3L777.0 478.5 M777.0 478.5L793.9 476.7 M777.0 478.5L780.8 492.4 M780.8 492.4L797.9 489.8 M780.8 492.4L784.6 505.9 M784.6 505.9L801.9 502.7 M784.6 505.9L788.6 519.3 M788.6 519.3L805.9 515.5 M670.9 179.7L688.2 176.0 M670.9 179.7L677.0 192.1 M677.0 192.1L693.8 188.1 M677.0 192.1L683.2 204.6 M683.2 204.6L699.5 200.1 M683.2 204.6L689.6 217.2 M689.6 217.2L705.3 212.2 M689.6 217.2L696.2 229.8 M696.2 229.8L711.1 224.2 M696.2 229.8L702.7 242.3 M702.7 242.3L716.7 235.8 M702.7 242.3L708.8 254.2 M708.8 254.2L721.7 246.7 M782.6 437.9L799.0 439.1 M782.6 437.9L786.4 450.4 M786.4 450.4L802.9 450.3 M786.4 450.4L790.1 463.5 M790.1 463.5L806.8 462.3 M790.1 463.5L793.9 476.7 M793.9 476.7L810.8 474.6 M793.9 476.7L797.9 489.8 M797.9 489.8L814.9 487.1 M797.9 489.8L801.9 502.7 M801.9 502.7L819.0 499.5 M801.9 502.7L805.9 515.5 M805.9 515.5L823.2 511.8 M688.2 176.0L705.5 172.3 M688.2 176.0L693.8 188.1 M693.8 188.1L710.7 184.1 M693.8 188.1L699.5 200.1 M699.5 200.1L716.0 195.9 M699.5 200.1L705.3 212.2 M705.3 212.2L721.2 207.6 M705.3 212.2L711.1 224.2 M711.1 224.2L726.4 219.2 M711.1 224.2L716.7 235.8 M716.7 235.8L731.3 230.3 M716.7 235.8L721.7 246.7 M721.7 246.7L735.7 240.6 M799.0 439.1L815.4 438.7 M799.0 439.1L802.9 450.3 M802.9 450.3L819.3 449.1 M802.9 450.3L806.8 462.3 M806.8 462.3L823.4 460.4 M806.8 462.3L810.8 474.6 M810.8 474.6L827.6 472.2 M810.8 474.6L814.9 487.1 M814.9 487.1L831.8 484.1 M814.9 487.1L819.0 499.5 M819.0 499.5L836.2 496.1 M819.0 499.5L823.2 511.8 M823.2 511.8L840.5 508.1 M705.5 172.3L722.8 168.6 M705.5 172.3L710.7 184.1 M710.7 184.1L727.7 180.3 M710.7 184.1L716.0 195.9 M716.0 195.9L732.6 192.0 M716.0 195.9L721.2 207.6 M721.2 207.6L737.4 203.6 M721.2 207.6L726.4 219.2 M726.4 219.2L742.1 215.0 M726.4 219.2L731.3 230.3 M731.3 230.3L746.7 225.8 M731.3 230.3L735.7 240.6 M735.7 240.6L750.7 235.7 M815.4 438.7L831.6 436.8 M815.4 438.7L819.3 449.1 M819.3 449.1L835.5 446.8 M819.3 449.1L823.4 460.4 M823.4 460.4L839.7 457.7 M823.4 460.4L827.6 472.2 M827.6 472.2L844.2 469.2 M827.6 472.2L831.8 484.1 M831.8 484.1L848.7 480.8 M831.8 484.1L836.2 496.1 M836.2 496.1L853.3 492.6 M836.2 496.1L840.5 508.1 M840.5 508.1L857.8 504.4 M722.8 168.6L740.2 164.8 M722.8 168.6L727.7 180.3 M727.7 180.3L744.7 176.6 M727.7 180.3L732.6 192.0 M732.6 192.0L749.3 188.4 M732.6 192.0L737.4 203.6 M737.4 203.6L753.8 200.0 M737.4 203.6L742.1 215.0 M742.1 215.0L758.3 211.5 M742.1 215.0L746.7 225.8 M746.7 225.8L762.5 222.4 M746.7 225.8L750.7 235.7 M750.7 235.7L766.4 232.4 M831.6 436.8L847.3 433.5 M831.6 436.8L835.5 446.8 M835.5 446.8L851.3 443.4 M835.5 446.8L839.7 457.7 M839.7 457.7L855.9 454.2 M839.7 457.7L844.2 469.2 M844.2 469.2L860.6 465.6 M844.2 469.2L848.7 480.8 M848.7 480.8L865.4 477.2 M848.7 480.8L853.3 492.6 M853.3 492.6L870.3 488.9 M853.3 492.6L857.8 504.4 M857.8 504.4L875.2 500.6 M740.2 164.8L757.5 161.1 M740.2 164.8L744.7 176.6 M744.7 176.6L761.8 173.1 M744.7 176.6L749.3 188.4 M749.3 188.4L766.2 185.1 M749.3 188.4L753.8 200.0 M753.8 200.0L770.4 197.0 M753.8 200.0L758.3 211.5 M758.3 211.5L774.6 208.8 M758.3 211.5L762.5 222.4 M762.5 222.4L778.7 220.1 M762.5 222.4L766.4 232.4 M766.4 232.4L782.6 230.5 M847.3 433.5L862.3 428.6 M847.3 433.5L851.3 443.4 M851.3 443.4L866.7 438.9 M851.3 443.4L855.9 454.2 M855.9 454.2L871.6 450.0 M855.9 454.2L860.6 465.6 M860.6 465.6L876.8 461.6 M860.6 465.6L865.4 477.2 M865.4 477.2L882.0 473.3 M865.4 477.2L870.3 488.9 M870.3 488.9L887.3 485.1 M870.3 488.9L875.2 500.6 M875.2 500.6L892.5 496.9 M757.5 161.1L774.8 157.4 M757.5 161.1L761.8 173.1 M761.8 173.1L779.0 169.7 M761.8 173.1L766.2 185.1 M766.2 185.1L783.1 182.1 M766.2 185.1L770.4 197.0 M770.4 197.0L787.2 194.6 M770.4 197.0L774.6 208.8 M774.6 208.8L791.2 206.9 M774.6 208.8L778.7 220.1 M778.7 220.1L795.1 218.9 M778.7 220.1L782.6 230.5 M782.6 230.5L799.0 230.1 M862.3 428.6L876.3 422.5 M862.3 428.6L866.7 438.9 M866.7 438.9L881.3 433.4 M866.7 438.9L871.6 450.0 M871.6 450.0L886.9 445.0 M871.6 450.0L876.8 461.6 M876.8 461.6L892.7 457.0 M876.8 461.6L882.0 473.3 M882.0 473.3L898.5 469.1 M882.0 473.3L887.3 485.1 M887.3 485.1L904.2 481.1 M887.3 485.1L892.5 496.9 M892.5 496.9L909.8 493.2 M774.8 157.4L792.1 153.7 M774.8 157.4L779.0 169.7 M779.0 169.7L796.1 166.5 M779.0 169.7L783.1 182.1 M783.1 182.1L800.1 179.4 M783.1 182.1L787.2 194.6 M787.2 194.6L804.1 192.5 M787.2 194.6L791.2 206.9 M791.2 206.9L807.9 205.7 M791.2 206.9L795.1 218.9 M795.1 218.9L811.6 218.8 M795.1 218.9L799.0 230.1 M799.0 230.1L815.4 231.3 M876.3 422.5L889.2 415.0 M876.3 422.5L881.3 433.4 M881.3 433.4L895.3 426.9 M881.3 433.4L886.9 445.0 M886.9 445.0L901.8 439.4 M886.9 445.0L892.7 457.0 M892.7 457.0L908.4 452.0 M892.7 457.0L898.5 469.1 M898.5 469.1L914.8 464.6 M898.5 469.1L904.2 481.1 M904.2 481.1L921.0 477.1 M904.2 481.1L909.8 493.2 M909.8 493.2L927.1 489.5 M792.1 153.7L809.4 149.9 M792.1 153.7L796.1 166.5 M796.1 166.5L813.4 163.3 M796.1 166.5L800.1 179.4 M800.1 179.4L817.2 176.8 M800.1 179.4L804.1 192.5 M804.1 192.5L821.0 190.7 M804.1 192.5L807.9 205.7 M807.9 205.7L824.7 204.9 M807.9 205.7L811.6 218.8 M811.6 218.8L828.2 219.5 M811.6 218.8L815.4 231.3 M815.4 231.3L831.5 233.9 M889.2 415.0L900.9 406.3 M889.2 415.0L895.3 426.9 M895.3 426.9L908.7 419.8 M895.3 426.9L901.8 439.4 M901.8 439.4L916.6 433.4 M901.8 439.4L908.4 452.0 M908.4 452.0L924.0 446.9 M908.4 452.0L914.8 464.6 M914.8 464.6L931.1 460.0 M914.8 464.6L921.0 477.1 M921.0 477.1L937.8 472.9 M921.0 477.1L927.1 489.5 M927.1 489.5L944.4 485.7 M809.4 149.9L826.8 146.2 M809.4 149.9L813.4 163.3 M813.4 163.3L830.6 160.1 M813.4 163.3L817.2 176.8 M817.2 176.8L834.5 174.2 M817.2 176.8L821.0 190.7 M821.0 190.7L838.2 188.8 M821.0 190.7L824.7 204.9 M824.7 204.9L841.8 204.1 M824.7 204.9L828.2 219.5 M828.2 219.5L844.8 220.4 M828.2 219.5L831.5 233.9 M831.5 233.9L847.2 238.1 M900.9 406.3L911.0 396.7 M900.9 406.3L908.7 419.8 M908.7 419.8L922.0 412.4 M908.7 419.8L916.6 433.4 M916.6 433.4L931.6 427.4 M916.6 433.4L924.0 446.9 M924.0 446.9L939.9 441.6 M924.0 446.9L931.1 460.0 M931.1 460.0L947.5 455.4 M931.1 460.0L937.8 472.9 M937.8 472.9L954.7 468.8 M937.8 472.9L944.4 485.7 M944.4 485.7L961.8 482.0 M826.8 146.2L844.1 142.5 M826.8 146.2L830.6 160.1 M830.6 160.1L848.0 156.8 M830.6 160.1L834.5 174.2 M834.5 174.2L851.9 171.3 M834.5 174.2L838.2 188.8 M838.2 188.8L855.8 186.3 M838.2 188.8L841.8 204.1 M841.8 204.1L859.4 202.3 M841.8 204.1L844.8 220.4 M844.8 220.4L862.2 220.2 M844.8 220.4L847.2 238.1 M847.2 238.1L862.2 243.6 M911.0 396.7L919.5 386.1 M911.0 396.7L922.0 412.4 M922.0 412.4L936.8 405.7 M922.0 412.4L931.6 427.4 M931.6 427.4L947.7 421.9 M931.6 427.4L939.9 441.6 M939.9 441.6L956.5 436.8 M939.9 441.6L947.5 455.4 M947.5 455.4L964.3 450.9 M947.5 455.4L954.7 468.8 M954.7 468.8L971.8 464.7 M954.7 468.8L961.8 482.0 M961.8 482.0L979.1 478.3 M844.1 142.5L861.4 138.7 M844.1 142.5L848.0 156.8 M848.0 156.8L865.5 153.3 M848.0 156.8L851.9 171.3 M851.9 171.3L869.6 168.0 M851.9 171.3L855.8 186.3 M855.8 186.3L873.8 183.0 M855.8 186.3L859.4 202.3 M859.4 202.3L878.0 198.5 M859.4 202.3L862.2 220.2 M862.2 220.2L882.3 214.6 M862.2 220.2L862.2 243.6 M862.2 243.6L887.3 230.9 M862.2 243.6L876.3 250.5 M876.3 250.5L896.5 242.5 M876.3 250.5L889.2 258.6 M889.2 258.6L906.5 253.0 M889.2 258.6L900.8 267.8 M900.8 267.8L916.2 263.5 M900.8 267.8L911.0 277.9 M911.0 277.9L925.0 274.4 M911.0 277.9L919.5 288.9 M919.5 288.9L932.7 285.9 M919.5 288.9L926.2 300.6 M926.2 300.6L939.0 297.8 M926.2 300.6L931.1 312.8 M931.1 312.8L943.9 310.1 M931.1 312.8L934.1 325.3 M934.1 325.3L947.4 322.6 M934.1 325.3L935.1 337.9 M935.1 337.9L949.5 335.3 M935.1 337.9L934.1 350.4 M934.1 350.4L950.2 348.0 M934.1 350.4L931.1 362.8 M931.1 362.8L949.8 360.6 M931.1 362.8L926.2 374.7 M926.2 374.7L949.1 373.4 M926.2 374.7L919.5 386.1 M919.5 386.1L949.9 386.8 M919.5 386.1L936.8 405.7 M936.8 405.7L957.9 402.5 M936.8 405.7L947.7 421.9 M947.7 421.9L966.2 417.7 M947.7 421.9L956.5 436.8 M956.5 436.8L974.1 432.4 M956.5 436.8L964.3 450.9 M964.3 450.9L981.7 446.7 M964.3 450.9L971.8 464.7 M971.8 464.7L989.1 460.7 M971.8 464.7L979.1 478.3 M979.1 478.3L996.4 474.5 M861.4 138.7L878.7 135.0 M861.4 138.7L865.5 153.3 M865.5 153.3L883.0 149.6 M865.5 153.3L869.6 168.0 M869.6 168.0L887.4 164.2 M869.6 168.0L873.8 183.0 M873.8 183.0L892.0 179.0 M873.8 183.0L878.0 198.5 M878.0 198.5L896.8 193.8 M878.0 198.5L882.3 214.6 M882.3 214.6L902.0 208.7 M882.3 214.6L887.3 230.9 M887.3 230.9L908.0 223.0 M887.3 230.9L896.5 242.5 M896.5 242.5L915.7 235.6 M896.5 242.5L906.5 253.0 M906.5 253.0L924.0 247.3 M906.5 253.0L916.2 263.5 M916.2 263.5L932.3 258.8 M916.2 263.5L925.0 274.4 M925.0 274.4L940.0 270.5 M925.0 274.4L932.7 285.9 M932.7 285.9L947.0 282.4 M932.7 285.9L939.0 297.8 M939.0 297.8L953.0 294.7 M939.0 297.8L943.9 310.1 M943.9 310.1L958.0 307.2 M943.9 310.1L947.4 322.6 M947.4 322.6L962.0 319.8 M947.4 322.6L949.5 335.3 M949.5 335.3L965.0 332.6 M949.5 335.3L950.2 348.0 M950.2 348.0L967.1 345.5 M950.2 348.0L949.8 360.6 M949.8 360.6L968.7 358.4 M949.8 360.6L949.1 373.4 M949.1 373.4L970.3 371.6 M949.1 373.4L949.9 386.8 M949.9 386.8L973.2 385.2 M949.9 386.8L957.9 402.5 M957.9 402.5L978.8 399.6 M957.9 402.5L966.2 417.7 M966.2 417.7L985.4 414.2 M966.2 417.7L974.1 432.4 M974.1 432.4L992.3 428.6 M974.1 432.4L981.7 446.7 M981.7 446.7L999.4 442.8 M981.7 446.7L989.1 460.7 M989.1 460.7L1006.5 456.8 M989.1 460.7L996.4 474.5 M996.4 474.5L1013.7 470.8 M878.7 135.0L896.0 131.3 M878.7 135.0L883.0 149.6 M883.0 149.6L900.6 145.7 M883.0 149.6L887.4 164.2 M887.4 164.2L905.3 160.2 M887.4 164.2L892.0 179.0 M892.0 179.0L910.1 174.6 M892.0 179.0L896.8 193.8 M896.8 193.8L915.3 188.9 M896.8 193.8L902.0 208.7 M902.0 208.7L920.9 203.1 M902.0 208.7L908.0 223.0 M908.0 223.0L927.1 216.8 M908.0 223.0L915.7 235.6 M915.7 235.6L933.9 229.7 M915.7 235.6L924.0 247.3 M924.0 247.3L941.2 242.0 M924.0 247.3L932.3 258.8 M932.3 258.8L948.5 254.2 M932.3 258.8L940.0 270.5 M940.0 270.5L955.4 266.4 M940.0 270.5L947.0 282.4 M947.0 282.4L961.9 278.8 M947.0 282.4L953.0 294.7 M953.0 294.7L967.7 291.4 M953.0 294.7L958.0 307.2 M958.0 307.2L972.8 304.1 M958.0 307.2L962.0 319.8 M962.0 319.8L977.2 317.0 M962.0 319.8L965.0 332.6 M965.0 332.6L981.0 329.9 M965.0 332.6L967.1 345.5 M967.1 345.5L984.2 343.0 M967.1 345.5L968.7 358.4 M968.7 358.4L987.1 356.1 M968.7 358.4L970.3 371.6 M970.3 371.6L990.1 369.4 M970.3 371.6L973.2 385.2 M973.2 385.2L993.9 382.9 M973.2 385.2L978.8 399.6 M978.8 399.6L998.8 396.9 M978.8 399.6L985.4 414.2 M985.4 414.2L1004.6 411.0 M985.4 414.2L992.3 428.6 M992.3 428.6L1010.8 425.1 M992.3 428.6L999.4 442.8 M999.4 442.8L1017.4 439.1 M999.4 442.8L1006.5 456.8 M1006.5 456.8L1024.2 453.1 M1006.5 456.8L1013.7 470.8 M1013.7 470.8L1031.0 467.1 M896.0 131.3L913.4 127.6 M896.0 131.3L900.6 145.7 M900.6 145.7L918.2 141.8 M900.6 145.7L905.3 160.2 M905.3 160.2L923.1 155.9 M905.3 160.2L910.1 174.6 M910.1 174.6L928.2 170.0 M910.1 174.6L915.3 188.9 M915.3 188.9L933.6 184.0 M915.3 188.9L920.9 203.1 M920.9 203.1L939.2 197.7 M920.9 203.1L927.1 216.8 M927.1 216.8L945.2 211.2 M927.1 216.8L933.9 229.7 M933.9 229.7L951.6 224.2 M933.9 229.7L941.2 242.0 M941.2 242.0L958.1 237.0 M941.2 242.0L948.5 254.2 M948.5 254.2L964.6 249.7 M948.5 254.2L955.4 266.4 M955.4 266.4L971.0 262.4 M955.4 266.4L961.9 278.8 M961.9 278.8L977.0 275.1 M961.9 278.8L967.7 291.4 M967.7 291.4L982.6 288.0 M967.7 291.4L972.8 304.1 M972.8 304.1L987.9 301.0 M972.8 304.1L977.2 317.0 M977.2 317.0L992.6 314.1 M977.2 317.0L981.0 329.9 M981.0 329.9L997.0 327.2 M981.0 329.9L984.2 343.0 M984.2 343.0L1001.1 340.4 M984.2 343.0L987.1 356.1 M987.1 356.1L1005.0 353.6 M987.1 356.1L990.1 369.4 M990.1 369.4L1009.0 366.9 M990.1 369.4L993.9 382.9 M993.9 382.9L1013.3 380.4 M993.9 382.9L998.8 396.9 M998.8 396.9L1018.2 394.1 M998.8 396.9L1004.6 411.0 M1004.6 411.0L1023.6 407.9 M1004.6 411.0L1010.8 425.1 M1010.8 425.1L1029.5 421.8 M1010.8 425.1L1017.4 439.1 M1017.4 439.1L1035.6 435.6 M1017.4 439.1L1024.2 453.1 M1024.2 453.1L1041.9 449.5 M1024.2 453.1L1031.0 467.1 M1031.0 467.1L1048.4 463.4 M913.4 127.6L930.7 123.8 M913.4 127.6L918.2 141.8 M918.2 141.8L935.8 137.7 M918.2 141.8L923.1 155.9 M923.1 155.9L941.0 151.5 M923.1 155.9L928.2 170.0 M928.2 170.0L946.2 165.2 M928.2 170.0L933.6 184.0 M933.6 184.0L951.6 178.9 M933.6 184.0L939.2 197.7 M939.2 197.7L957.2 192.5 M939.2 197.7L945.2 211.2 M945.2 211.2L962.9 205.9 M945.2 211.2L951.6 224.2 M951.6 224.2L968.8 219.1 M951.6 224.2L958.1 237.0 M958.1 237.0L974.7 232.2 M958.1 237.0L964.6 249.7 M964.6 249.7L980.7 245.3 M964.6 249.7L971.0 262.4 M971.0 262.4L986.5 258.4 M971.0 262.4L977.0 275.1 M977.0 275.1L992.2 271.5 M977.0 275.1L982.6 288.0 M982.6 288.0L997.7 284.7 M982.6 288.0L987.9 301.0 M987.9 301.0L1003.0 297.9 M987.9 301.0L992.6 314.1 M992.6 314.1L1008.1 311.1 M992.6 314.1L997.0 327.2 M997.0 327.2L1013.1 324.4 M997.0 327.2L1001.1 340.4 M1001.1 340.4L1017.8 337.7 M1001.1 340.4L1005.0 353.6 M1005.0 353.6L1022.5 351.0 M1005.0 353.6L1009.0 366.9 M1009.0 366.9L1027.2 364.4 M1009.0 366.9L1013.3 380.4 M1013.3 380.4L1032.1 377.9 M1013.3 380.4L1018.2 394.1 M1018.2 394.1L1037.2 391.4 M1018.2 394.1L1023.6 407.9 M1023.6 407.9L1042.5 405.0 M1023.6 407.9L1029.5 421.8 M1029.5 421.8L1048.1 418.7 M1029.5 421.8L1035.6 435.6 M1035.6 435.6L1053.9 432.3 M1035.6 435.6L1041.9 449.5 M1041.9 449.5L1059.7 446.0 M1041.9 449.5L1048.4 463.4 M1048.4 463.4L1065.7 459.6 M930.7 123.8L948.0 120.1 M930.7 123.8L935.8 137.7 M935.8 137.7L953.4 133.5 M935.8 137.7L941.0 151.5 M941.0 151.5L958.8 147.0 M941.0 151.5L946.2 165.2 M946.2 165.2L964.2 160.4 M946.2 165.2L951.6 178.9 M951.6 178.9L969.6 173.8 M951.6 178.9L957.2 192.5 M957.2 192.5L975.0 187.3 M957.2 192.5L962.9 205.9 M962.9 205.9L980.4 200.7 M962.9 205.9L968.8 219.1 M968.8 219.1L985.8 214.1 M968.8 219.1L974.7 232.2 M974.7 232.2L991.2 227.6 M974.7 232.2L980.7 245.3 M980.7 245.3L996.6 241.0 M980.7 245.3L986.5 258.4 M986.5 258.4L1002.0 254.4 M986.5 258.4L992.2 271.5 M992.2 271.5L1007.4 267.9 M992.2 271.5L997.7 284.7 M997.7 284.7L1012.8 281.3 M997.7 284.7L1003.0 297.9 M1003.0 297.9L1018.2 294.7 M1003.0 297.9L1008.1 311.1 M1008.1 311.1L1023.6 308.1 M1008.1 311.1L1013.1 324.4 M1013.1 324.4L1029.0 321.6 M1013.1 324.4L1017.8 337.7 M1017.8 337.7L1034.4 335.0 M1017.8 337.7L1022.5 351.0 M1022.5 351.0L1039.8 348.4 M1022.5 351.0L1027.2 364.4 M1027.2 364.4L1045.2 361.9 M1027.2 364.4L1032.1 377.9 M1032.1 377.9L1050.6 375.3 M1032.1 377.9L1037.2 391.4 M1037.2 391.4L1056.0 388.7 M1037.2 391.4L1042.5 405.0 M1042.5 405.0L1061.4 402.2 M1042.5 405.0L1048.1 418.7 M1048.1 418.7L1066.8 415.6 M1048.1 418.7L1053.9 432.3 M1053.9 432.3L1072.2 429.0 M1053.9 432.3L1059.7 446.0 M1059.7 446.0L1077.6 442.5 M1059.7 446.0L1065.7 459.6 M1065.7 459.6L1083.0 455.9 M948.0 120.1L953.4 133.5 M953.4 133.5L958.8 147.0 M958.8 147.0L964.2 160.4 M964.2 160.4L969.6 173.8 M969.6 173.8L975.0 187.3 M975.0 187.3L980.4 200.7 M980.4 200.7L985.8 214.1 M985.8 214.1L991.2 227.6 M991.2 227.6L996.6 241.0 M996.6 241.0L1002.0 254.4 M1002.0 254.4L1007.4 267.9 M1007.4 267.9L1012.8 281.3 M1012.8 281.3L1018.2 294.7 M1018.2 294.7L1023.6 308.1 M1023.6 308.1L1029.0 321.6 M1029.0 321.6L1034.4 335.0 M1034.4 335.0L1039.8 348.4 M1039.8 348.4L1045.2 361.9 M1045.2 361.9L1050.6 375.3 M1050.6 375.3L1056.0 388.7 M1056.0 388.7L1061.4 402.2 M1061.4 402.2L1066.8 415.6 M1066.8 415.6L1072.2 429.0 M1072.2 429.0L1077.6 442.5 M1077.6 442.5L1083.0 455.9" stroke="#000" stroke-width="1" fill="none" shape-rendering="crispEdges"/>
<defs><clipPath id="nonplate"><path clip-rule="evenodd" d="M353 84H1245V589H353Z M515.0 213.3L948.0 120.1L1083.0 455.9L650.0 549.1Z M931.1 312.8L934.1 325.3L935.1 337.9L934.1 350.4L931.1 362.8L926.2 374.7L919.5 386.1L911.0 396.7L900.9 406.3L889.2 415.0L876.3 422.5L862.3 428.6L847.3 433.5L831.6 436.8L815.4 438.7L799.0 439.1L782.6 437.9L766.5 435.3L750.8 431.1L735.8 425.6L721.7 418.7L708.8 410.6L697.2 401.4L687.0 391.3L678.5 380.3L671.8 368.6L666.9 356.4L663.9 343.9L662.9 331.3L663.9 318.8L666.9 306.4L671.8 294.5L678.5 283.1L687.0 272.5L697.1 262.9L708.8 254.2L721.7 246.7L735.7 240.6L750.7 235.7L766.4 232.4L782.6 230.5L799.0 230.1L815.4 231.3L831.5 233.9L847.2 238.1L862.2 243.6L876.3 250.5L889.2 258.6L900.8 267.8L911.0 277.9L919.5 288.9L926.2 300.6Z"/></clipPath></defs>
<path d="M515.0 213.8L512.0 219.3L518.0 219.3Z M520.4 227.2L517.4 232.7L523.4 232.7Z M525.8 240.7L522.8 246.2L528.8 246.2Z M531.2 254.1L528.2 259.6L534.2 259.6Z M536.6 267.5L533.6 273.0L539.6 273.0Z M542.0 281.0L539.0 286.5L545.0 286.5Z M547.4 294.4L544.4 299.9L550.4 299.9Z M552.8 307.8L549.8 313.3L555.8 313.3Z M558.2 321.3L555.2 326.8L561.2 326.8Z M563.6 334.7L560.6 340.2L566.6 340.2Z M569.0 348.1L566.0 353.6L572.0 353.6Z M574.4 361.6L571.4 367.1L577.4 367.1Z M579.8 375.0L576.8 380.5L582.8 380.5Z M585.2 388.4L582.2 393.9L588.2 393.9Z M590.6 401.8L587.6 407.3L593.6 407.3Z M596.0 415.3L593.0 420.8L599.0 420.8Z M601.4 428.7L598.4 434.2L604.4 434.2Z M606.8 442.1L603.8 447.6L609.8 447.6Z M612.2 455.6L609.2 461.1L615.2 461.1Z M617.6 469.0L614.6 474.5L620.6 474.5Z M623.0 482.4L620.0 487.9L626.0 487.9Z M628.4 495.9L625.4 501.4L631.4 501.4Z M633.8 509.3L630.8 514.8L636.8 514.8Z M639.2 522.7L636.2 528.2L642.2 528.2Z M644.6 536.2L641.6 541.7L647.6 541.7Z M650.0 549.6L647.0 555.1L653.0 555.1Z M1083.0 456.4l-3 4h6Z" fill="#e64ce6"/>
<g clip-path="url(#nonplate)"><path d="M930.6 312.8h1.6v6h-1.6Z M933.6 325.3h1.6v6h-1.6Z M934.6 337.9h1.6v6h-1.6Z M933.6 350.4h1.6v6h-1.6Z M930.6 362.8h1.6v6h-1.6Z M925.7 374.7h1.6v6h-1.6Z M919.0 386.1h1.6v6h-1.6Z M910.5 396.7h1.6v6h-1.6Z M900.4 406.3h1.6v6h-1.6Z M888.7 415.0h1.6v6h-1.6Z M875.8 422.5h1.6v6h-1.6Z M861.8 428.6h1.6v6h-1.6Z M846.8 433.5h1.6v6h-1.6Z M831.1 436.8h1.6v6h-1.6Z M814.9 438.7h1.6v6h-1.6Z M798.5 439.1h1.6v6h-1.6Z M782.1 437.9h1.6v6h-1.6Z M766.0 435.3h1.6v6h-1.6Z M750.3 431.1h1.6v6h-1.6Z M735.3 425.6h1.6v6h-1.6Z M721.2 418.7h1.6v6h-1.6Z M708.3 410.6h1.6v6h-1.6Z M696.7 401.4h1.6v6h-1.6Z M686.5 391.3h1.6v6h-1.6Z M678.0 380.3h1.6v6h-1.6Z M671.3 368.6h1.6v6h-1.6Z M666.4 356.4h1.6v6h-1.6Z M663.4 343.9h1.6v6h-1.6Z M662.4 331.3h1.6v6h-1.6Z M663.4 318.8h1.6v6h-1.6Z M666.4 306.4h1.6v6h-1.6Z M671.3 294.5h1.6v6h-1.6Z M678.0 283.1h1.6v6h-1.6Z M686.5 272.5h1.6v6h-1.6Z M696.6 262.9h1.6v6h-1.6Z M708.3 254.2h1.6v6h-1.6Z M721.2 246.7h1.6v6h-1.6Z M735.2 240.6h1.6v6h-1.6Z M750.2 235.7h1.6v6h-1.6Z M765.9 232.4h1.6v6h-1.6Z M782.1 230.5h1.6v6h-1.6Z M798.5 230.1h1.6v6h-1.6Z M814.9 231.3h1.6v6h-1.6Z M831.0 233.9h1.6v6h-1.6Z M846.7 238.1h1.6v6h-1.6Z M861.7 243.6h1.6v6h-1.6Z M875.8 250.5h1.6v6h-1.6Z M888.7 258.6h1.6v6h-1.6Z M900.3 267.8h1.6v6h-1.6Z M910.5 277.9h1.6v6h-1.6Z M919.0 288.9h1.6v6h-1.6Z M925.7 300.6h1.6v6h-1.6Z" fill="#e050e0"/><g fill="#ffffff" font-size="12.5px" font-family="Liberation Sans"><text transform="matrix(1 0 0 1.1 931.1 319.3)">FORCE =  2.18e+01</text><text transform="matrix(1 0 0 1.1 934.1 331.8)">FORCE =  2.18e+01</text><text transform="matrix(1 0 0 1.1 935.1 344.4)">FORCE =  2.18e+01</text><text transform="matrix(1 0 0 1.1 934.1 356.9)">FORCE =  2.18e+01</text><text transform="matrix(1 0 0 1.1 931.1 369.3)">FORCE =  2.18e+01</text><text transform="matrix(1 0 0 1.1 926.2 381.2)">FORCE =  2.18e+01</text><text transform="matrix(1 0 0 1.1 919.5 392.6)">FORCE =  2.18e+01</text><text transform="matrix(1 0 0 1.1 911.0 403.2)">FORCE =  2.18e+01</text><text transform="matrix(1 0 0 1.1 900.9 412.8)">FORCE =  2.18e+01</text><text transform="matrix(1 0 0 1.1 889.2 421.5)">FORCE =  2.18e+01</text><text transform="matrix(1 0 0 1.1 876.3 429.0)">FORCE =  2.18e+01</text><text transform="matrix(1 0 0 1.1 862.3 435.1)">FORCE =  2.18e+01</text><text transform="matrix(1 0 0 1.1 847.3 440.0)">FORCE =  2.18e+01</text><text transform="matrix(1 0 0 1.1 831.6 443.3)">FORCE =  2.18e+01</text><text transform="matrix(1 0 0 1.1 815.4 445.2)">FORCE =  2.18e+01</text><text transform="matrix(1 0 0 1.1 799.0 445.6)">FORCE =  2.18e+01</text><text transform="matrix(1 0 0 1.1 782.6 444.4)">FORCE =  2.18e+01</text><text transform="matrix(1 0 0 1.1 766.5 441.8)">FORCE =  2.18e+01</text><text transform="matrix(1 0 0 1.1 750.8 437.6)">FORCE =  2.18e+01</text><text transform="matrix(1 0 0 1.1 735.8 432.1)">FORCE =  2.18e+01</text><text transform="matrix(1 0 0 1.1 721.7 425.2)">FORCE =  2.18e+01</text><text transform="matrix(1 0 0 1.1 708.8 417.1)">FORCE =  2.18e+01</text><text transform="matrix(1 0 0 1.1 697.2 407.9)">FORCE =  2.18e+01</text><text transform="matrix(1 0 0 1.1 687.0 397.8)">FORCE =  2.18e+01</text><text transform="matrix(1 0 0 1.1 678.5 386.8)">FORCE =  2.18e+01</text><text transform="matrix(1 0 0 1.1 671.8 375.1)">FORCE =  2.18e+01</text><text transform="matrix(1 0 0 1.1 666.9 362.9)">FORCE =  2.18e+01</text><text transform="matrix(1 0 0 1.1 663.9 350.4)">FORCE =  2.18e+01</text><text transform="matrix(1 0 0 1.1 662.9 337.8)">FORCE =  2.18e+01</text><text transform="matrix(1 0 0 1.1 663.9 325.3)">FORCE =  2.18e+01</text><text transform="matrix(1 0 0 1.1 666.9 312.9)">FORCE =  2.18e+01</text><text transform="matrix(1 0 0 1.1 671.8 301.0)">FORCE =  2.18e+01</text><text transform="matrix(1 0 0 1.1 678.5 289.6)">FORCE =  2.18e+01</text><text transform="matrix(1 0 0 1.1 687.0 279.0)">FORCE =  2.18e+01</text><text transform="matrix(1 0 0 1.1 697.1 269.4)">FORCE =  2.18e+01</text><text transform="matrix(1 0 0 1.1 708.8 260.7)">FORCE =  2.18e+01</text><text transform="matrix(1 0 0 1.1 721.7 253.2)">FORCE =  2.18e+01</text><text transform="matrix(1 0 0 1.1 735.7 247.1)">FORCE =  2.18e+01</text><text transform="matrix(1 0 0 1.1 750.7 242.2)">FORCE =  2.18e+01</text><text transform="matrix(1 0 0 1.1 766.4 238.9)">FORCE =  2.18e+01</text><text transform="matrix(1 0 0 1.1 782.6 237.0)">FORCE =  2.18e+01</text><text transform="matrix(1 0 0 1.1 799.0 236.6)">FORCE =  2.18e+01</text><text transform="matrix(1 0 0 1.1 815.4 237.8)">FORCE =  2.18e+01</text><text transform="matrix(1 0 0 1.1 831.5 240.4)">FORCE =  2.18e+01</text><text transform="matrix(1 0 0 1.1 847.2 244.6)">FORCE =  2.18e+01</text><text transform="matrix(1 0 0 1.1 862.2 250.1)">FORCE =  2.18e+01</text><text transform="matrix(1 0 0 1.1 876.3 257.0)">FORCE =  2.18e+01</text><text transform="matrix(1 0 0 1.1 889.2 265.1)">FORCE =  2.18e+01</text><text transform="matrix(1 0 0 1.1 900.8 274.3)">FORCE =  2.18e+01</text><text transform="matrix(1 0 0 1.1 911.0 284.4)">FORCE =  2.18e+01</text><text transform="matrix(1 0 0 1.1 919.5 295.4)">FORCE =  2.18e+01</text><text transform="matrix(1 0 0 1.1 926.2 307.1)">FORCE =  2.18e+01</text></g></g>
<g fill="#ffffff" font-size="12.3px" font-family="Liberation Sans"><text transform="matrix(1 0 0 1.12 515.0 214.3)">123456</text><text transform="matrix(1 0 0 1.12 948.0 120.1)">123456</text><text transform="matrix(1 0 0 1.12 520.4 227.7)">123456</text><text transform="matrix(1 0 0 1.12 953.4 133.5)">123456</text><text transform="matrix(1 0 0 1.12 525.8 241.2)">123456</text><text transform="matrix(1 0 0 1.12 958.8 147.0)">123456</text><text transform="matrix(1 0 0 1.12 531.2 254.6)">123456</text><text transform="matrix(1 0 0 1.12 964.2 160.4)">123456</text><text transform="matrix(1 0 0 1.12 536.6 268.0)">123456</text><text transform="matrix(1 0 0 1.12 969.6 173.8)">123456</text><text transform="matrix(1 0 0 1.12 542.0 281.5)">123456</text><text transform="matrix(1 0 0 1.12 975.0 187.3)">123456</text><text transform="matrix(1 0 0 1.12 547.4 294.9)">123456</text><text transform="matrix(1 0 0 1.12 980.4 200.7)">123456</text><text transform="matrix(1 0 0 1.12 552.8 308.3)">123456</text><text transform="matrix(1 0 0 1.12 985.8 214.1)">123456</text><text transform="matrix(1 0 0 1.12 558.2 321.8)">123456</text><text transform="matrix(1 0 0 1.12 991.2 227.6)">123456</text><text transform="matrix(1 0 0 1.12 563.6 335.2)">123456</text><text transform="matrix(1 0 0 1.12 996.6 241.0)">123456</text><text transform="matrix(1 0 0 1.12 569.0 348.6)">123456</text><text transform="matrix(1 0 0 1.12 1002.0 254.4)">123456</text><text transform="matrix(1 0 0 1.12 574.4 362.1)">123456</text><text transform="matrix(1 0 0 1.12 1007.4 267.9)">123456</text><text transform="matrix(1 0 0 1.12 579.8 375.5)">123456</text><text transform="matrix(1 0 0 1.12 1012.8 281.3)">123456</text><text transform="matrix(1 0 0 1.12 585.2 388.9)">123456</text><text transform="matrix(1 0 0 1.12 1018.2 294.7)">123456</text><text transform="matrix(1 0 0 1.12 590.6 402.3)">123456</text><text transform="matrix(1 0 0 1.12 1023.6 308.1)">123456</text><text transform="matrix(1 0 0 1.12 596.0 415.8)">123456</text><text transform="matrix(1 0 0 1.12 1029.0 321.6)">123456</text><text transform="matrix(1 0 0 1.12 601.4 429.2)">123456</text><text transform="matrix(1 0 0 1.12 1034.4 335.0)">123456</text><text transform="matrix(1 0 0 1.12 606.8 442.6)">123456</text><text transform="matrix(1 0 0 1.12 1039.8 348.4)">123456</text><text transform="matrix(1 0 0 1.12 612.2 456.1)">123456</text><text transform="matrix(1 0 0 1.12 1045.2 361.9)">123456</text><text transform="matrix(1 0 0 1.12 617.6 469.5)">123456</text><text transform="matrix(1 0 0 1.12 1050.6 375.3)">123456</text><text transform="matrix(1 0 0 1.12 623.0 482.9)">123456</text><text transform="matrix(1 0 0 1.12 1056.0 388.7)">123456</text><text transform="matrix(1 0 0 1.12 628.4 496.4)">123456</text><text transform="matrix(1 0 0 1.12 1061.4 402.2)">123456</text><text transform="matrix(1 0 0 1.12 633.8 509.8)">123456</text><text transform="matrix(1 0 0 1.12 1066.8 415.6)">123456</text><text transform="matrix(1 0 0 1.12 639.2 523.2)">123456</text><text transform="matrix(1 0 0 1.12 1072.2 429.0)">123456</text><text transform="matrix(1 0 0 1.12 644.6 536.7)">123456</text><text transform="matrix(1 0 0 1.12 1077.6 442.5)">123456</text><text transform="matrix(1 0 0 1.12 650.0 550.1)">123456</text><text transform="matrix(1 0 0 1.12 1083.0 455.9)">123456</text></g>
</g></svg>
<svg class="a" style="left:353px;top:510px" width="70" height="75" viewBox="353 510 70 75">
<path d="M406.5 562L393.5 531" stroke="#c02850" stroke-width="2.2"/>
<path d="M406.7 562.3V537" stroke="#1010e0" stroke-width="1.6"/><path d="M405 541l2.7-6 2.5 6z" fill="#1010e0"/>
<path d="M406.7 562.3L367 572" stroke="#20e020" stroke-width="1.6"/><path d="M366 572l7-4 0 5z" fill="#20e020"/>
<g stroke="#fff" stroke-width="1.1" fill="none">
<path d="M390 517.5l8.5 9.5M398.5 517.5l-8.5 9.5"/>
<path d="M409 521.5h5.5l-5.5 9h6"/>
<path d="M356 568l4.5 4.5 4.5-4.5M360.5 572.5v5"/>
</g>
</svg>


<!-- bottom toolbar -->
<svg class="a" style="left:318px;top:589px" width="780" height="32" viewBox="318 589 780 32">
<defs>
<path id="fd" d="M0.5 2.5h5l1.5-2h7v14h-13.5z" fill="#f8f080" stroke="#b0a050" stroke-width="0.8"/>
<path id="tr" d="M6 0v6h-6z" fill="#222"/>
</defs>
<g fill="#111">
<rect x="326" y="593" width="2.5" height="2.5"/><rect x="326" y="600" width="2.5" height="2.5"/><rect x="326" y="607" width="2.5" height="2.5"/><rect x="326" y="614" width="2.5" height="2.5"/>
<rect x="613" y="593" width="2.5" height="2.5"/><rect x="613" y="600" width="2.5" height="2.5"/><rect x="613" y="607" width="2.5" height="2.5"/><rect x="613" y="614" width="2.5" height="2.5"/>
</g>
<use href="#fd" x="336" y="595"/><ellipse cx="345" cy="604" rx="4" ry="3" fill="#20a020"/><ellipse cx="340" cy="609" rx="4" ry="3" fill="#2030c0"/><ellipse cx="349" cy="609" rx="3.5" ry="3" fill="#e08020"/>
<use href="#fd" x="361" y="595"/><path d="M362 607q0-4 7-4t7 4v2q0 4-7 4t-7-4z" fill="#1a2ad0"/>
<use href="#fd" x="387" y="595"/><path d="M391 613v-9h9v9M392 606q4-3 7 0" stroke="#a02020" fill="none"/><rect x="394" y="607" width="3" height="5" fill="#6a8a6a"/>
<use href="#fd" x="412" y="595"/><path d="M413 609l3-3h9l-2 4h-10z" fill="#c8c8c8" stroke="#111"/><path d="M430 602v8" stroke="#c02020" stroke-width="0.8"/><text x="427" y="616" font-size="7" font-weight="bold" font-family="Liberation Sans">t</text>
<use href="#fd" x="440" y="595"/><path d="M448 600v10" stroke="#e02020" stroke-width="1.8"/><path d="M445 607l3 4 3-4z" fill="#e02020"/><circle cx="448" cy="612" r="1.6" fill="#222"/>
<use href="#fd" x="466" y="595"/><path d="M474 604v5l-4 3M474 609l5 2" stroke="#333" stroke-width="0.8" fill="none"/><text x="470" y="605" font-size="5" font-family="Liberation Sans">z</text><text x="478" y="607" font-size="5" font-family="Liberation Sans">y</text><use href="#tr" x="481" y="610"/>
<rect x="496.5" y="596" width="1" height="18" fill="#b8b4a4"/>
<path d="M509 599l12 12M521 599l-12 12" stroke="#c82848" stroke-width="2.4"/>
<path d="M536.5 597.5h13l-3 5h-13z M534.5 601.5h13l-3 5h-13z M532.5 605.5h13l-3 6h-13z" fill="#f8f080" stroke="#111" stroke-width="0.9"/>
<path d="M556.5 599.5h9v7h-9z" fill="#f8f080" stroke="#111" stroke-width="0.9"/><path d="M562.5 604.5h12v9h-12z" fill="#f8f080" stroke="#111" stroke-width="0.9"/><path d="M566 599q4-4 8 1" stroke="#d02020" stroke-width="1.4" fill="none"/>
<g font-family="Liberation Sans" font-weight="bold" fill="#3e3e7a"><text x="582" y="605" font-size="10.5">1</text><text x="589" y="615.5" font-size="10.5">3</text><text x="595" y="606" font-size="11">2</text></g><path d="M589 598l3-2v2M583 610h4l-1.5-1.5M597 614l2-3 1 2" stroke="#111" stroke-width="0.9" fill="none"/>
<rect x="619" y="593" width="83" height="23" fill="#fff"/><rect x="702" y="593" width="17" height="23" fill="#ece9d8"/><path d="M705 601h8l-4 5z" fill="#111"/>
<path d="M621 609l7-5 6 4-7 5z" fill="#8090c8" stroke="#333" stroke-width="0.7"/><path d="M624 597l6 3v6l-6-2z" fill="#a8b0d8" stroke="#333" stroke-width="0.7"/><path d="M628 604l8-5 2 3-8 4z" fill="#e0c030"/><path d="M634 599l3-4" stroke="#333"/>
<path d="M724 612l5-5 5 3-5 5z" fill="#fff" stroke="#111" stroke-width="0.8"/><path d="M728 595l6 3v9l-6-3z M734 598l7 5-7 4" fill="#fff" stroke="#111" stroke-width="0.8"/><use href="#tr" x="740" y="610"/>
<path d="M753 612l5-5 6 3-6 5z" fill="#8090c8" stroke="#333" stroke-width="0.7"/><path d="M757 595l7 3v9l-7-3z" fill="#f020f0" stroke="#333" stroke-width="0.7"/><path d="M764 598l7 5-7 4z" fill="#8090c8"/><use href="#tr" x="769" y="610"/>
<rect x="783.5" y="596" width="1" height="18" fill="#b8b4a4"/>
<rect x="790" y="593" width="78" height="22" fill="#fff"/><rect x="867.5" y="593" width="17" height="22" fill="#ece9d8"/><path d="M871 601h8l-4 5z" fill="#111"/>
<path d="M791 603l7-3 7 3v8l-7 3-7-3z" fill="#7a88b8" stroke="#333" stroke-width="0.8"/><path d="M792 603l7 3 6-3" stroke="#333" fill="none" stroke-width="0.7"/><path d="M797 604l9-6" stroke="#e0b020" stroke-width="2"/>
<g stroke="#111" stroke-width="0.9">
<path d="M889 601l9-4 9 4v10l-9 4-9-4z" fill="#fff"/><path d="M889 601l9 4 9-4M898 605v10M892 599.5l9 4M895 598l9 4M889 604.5l9 4M889 608l9 4M898 609l9-4M898 612l9-4" fill="none"/>
<path d="M919 601l9-4 9 4v10l-9 4-9-4z" fill="#9aa8d8"/><path d="M919 601l9 4 9-4M928 605v10M922 599.5l9 4M925 598l9 4M919 606l9 4M928 610l9-4" fill="none" stroke="#333" stroke-width="0.7"/>
</g>
<use href="#tr" x="904" y="610"/><use href="#tr" x="934" y="610"/>
<path d="M947 604l11-5 12 5-12 5z" fill="#8a4a4a" stroke="#555" stroke-width="0.8"/><path d="M952 602l12 5" stroke="#c07070" stroke-width="1.5"/><use href="#tr" x="965" y="610"/>
<rect x="979.5" y="596" width="1" height="18" fill="#b8b4a4"/>
<rect x="993.5" y="597.5" width="13" height="11" fill="#c8d0e8" stroke="#333"/><rect x="989.5" y="600.5" width="13" height="11" fill="#b0bce0" stroke="#333"/>
<path d="M1014 602l9-4 9 4v10l-9 4-9-4z" fill="#fff" stroke="#111" stroke-width="0.9"/><path d="M1014 602l9 4 9-4v10l-9 4z" fill="#6a7ab8" stroke="#111" stroke-width="0.7"/><path d="M1014 602l9-4 9 4-9 4z" fill="#8a9ad0" stroke="#111" stroke-width="0.7"/>
<g fill="#222"><path d="M1043 600h5v3h-5zM1050 600h5v3h-5zM1045 606h5v3h-5zM1052 606h5v3h-5z"/></g>
<circle cx="1071" cy="606" r="4" fill="none" stroke="#222" stroke-width="1.1"/><circle cx="1081" cy="605" r="4" fill="none" stroke="#222" stroke-width="1.1"/><path d="M1075 605h2M1084 601l3-3" stroke="#222" stroke-width="1.1"/>
</svg>
<div class="t" style="left:640px;top:599px;font-size:11px">Auto</div>
<div class="t" style="left:811px;top:599px;font-size:11px;letter-spacing:-0.3px">By Comp</div>


<!-- panel -->
<div class="btn" style="left:321px;top:629px;width:117px;height:19px"></div>
<div class="t" style="left:350px;top:632px;font-size:13px">name</div><div class="t" style="left:404px;top:632px;font-size:13px">=</div>
<div class="fld" style="left:446px;top:629px;width:179px;height:19px"></div>
<div class="t" style="left:458px;top:632px;font-size:13px">b v</div>
<div class="cb" style="left:328px;top:672px"></div><div class="cb" style="left:328px;top:692px"></div><div class="cb" style="left:328px;top:712px"></div>
<svg class="a" style="left:328px;top:672px" width="14" height="34"><path d="M3 6l3 4 5-7M3 26l3 4 5-7" stroke="#000" stroke-width="2" fill="none"/></svg>
<div class="t" style="left:347px;top:671.5px;font-size:13px">SPC</div>
<div class="t" style="left:347px;top:691.5px;font-size:13px">LOAD</div>
<div class="t" style="left:347px;top:711.5px;font-size:13px">SUPORT1</div>
<div class="btn" style="left:464px;top:669px;width:39px;height:20px"></div>
<div class="btn" style="left:464px;top:689px;width:39px;height:20px"></div>
<div class="t" style="left:480px;top:672px;font-size:12px">=</div><div class="t" style="left:480px;top:692px;font-size:12px">=</div>
<div class="fld" style="left:510px;top:670px;width:102px;height:19px"></div>
<div class="fld" style="left:510px;top:690px;width:102px;height:19px"></div>
<div class="t" style="left:583px;top:672.5px;font-size:13px">4</div>
<div class="t" style="left:583px;top:692.5px;font-size:13px">5</div>
<div class="cb" style="left:666px;top:672px"></div><div class="cb" style="left:666px;top:692px"></div>
<div class="t" style="left:685px;top:672px;font-size:13px">MPC</div>
<div class="t" style="left:685px;top:692px;font-size:13px">TEMP</div>
<div class="t" style="left:828px;top:632px;font-size:13px">type:</div>
<div class="btn" style="left:867px;top:629px;width:26px;height:20px"></div>
<svg class="a" style="left:874px;top:635px" width="12" height="8"><path d="M0.5 0.5h10l-5 6z" fill="#000"/></svg>
<div class="btn" style="left:893px;top:629px;width:245px;height:20px"></div>
<div class="t" style="left:974px;top:632px;font-size:13px">linear static</div>
<div class="gb" style="left:1150px;top:629px;width:71px;height:20px"></div>
<div class="gb" style="left:1150px;top:649px;width:71px;height:20px"></div>
<div class="gb" style="left:1150px;top:669px;width:71px;height:20px"></div>
<div class="gb" style="left:1150px;top:689px;width:71px;height:20px;background:#6878d8;border-top-color:#a8b8f0;border-left-color:#a8b8f0;border-right-color:#1a1a50;border-bottom-color:#1a1a50"></div>
<div class="t" style="left:1168px;top:631.5px;font-size:13px">create</div>
<div class="t" style="left:1176px;top:651.5px;font-size:13px">edit</div>
<div class="t" style="left:1165px;top:671.5px;font-size:13px">update</div>
<div class="t" style="left:1167px;top:691.5px;font-size:13px">review</div>
<div class="a" style="left:1162px;top:749px;width:71px;height:20px;background:#c85a5a;border:2px solid #3a1010;border-top-color:#5a2020;border-left-color:#5a2020"><div class="a" style="left:1px;top:1px;width:65px;height:14px;border:1px solid #803030;border-right-color:#e09090;border-bottom-color:#e09090"></div></div>
<div class="t" style="left:1182px;top:751.4px;font-size:13px">return</div>

<div class="a" style="left:1253px;top:80px;width:1px;height:698px;background:#6a6a60"></div>
<div class="a" style="left:321px;top:772px;width:924px;height:1px;background:#6a6a60"></div>
<div class="a" style="left:321px;top:773px;width:924px;height:1px;background:#fff"></div>

<!-- status bar -->
<div class="t" style="left:13px;top:785.5px;font-size:13px">LoadSteps</div>
<div class="a" style="left:849px;top:782px;width:124px;height:21px;border-top:2px solid #222;border-left:2px solid #222"></div>
<div class="a" style="left:975px;top:782px;width:138px;height:21px;border-top:2px solid #222;border-left:2px solid #222"></div>
<div class="a" style="left:1115px;top:782px;width:140px;height:21px;border-top:2px solid #222;border-left:2px solid #222"></div>
<div class="a" style="left:1121px;top:788px;width:10px;height:10px;background:#e84ce8;border:1px solid #202020"></div>
<div class="t" style="left:1135px;top:785.7px;font-size:13px">spcs</div>
</body></html>
